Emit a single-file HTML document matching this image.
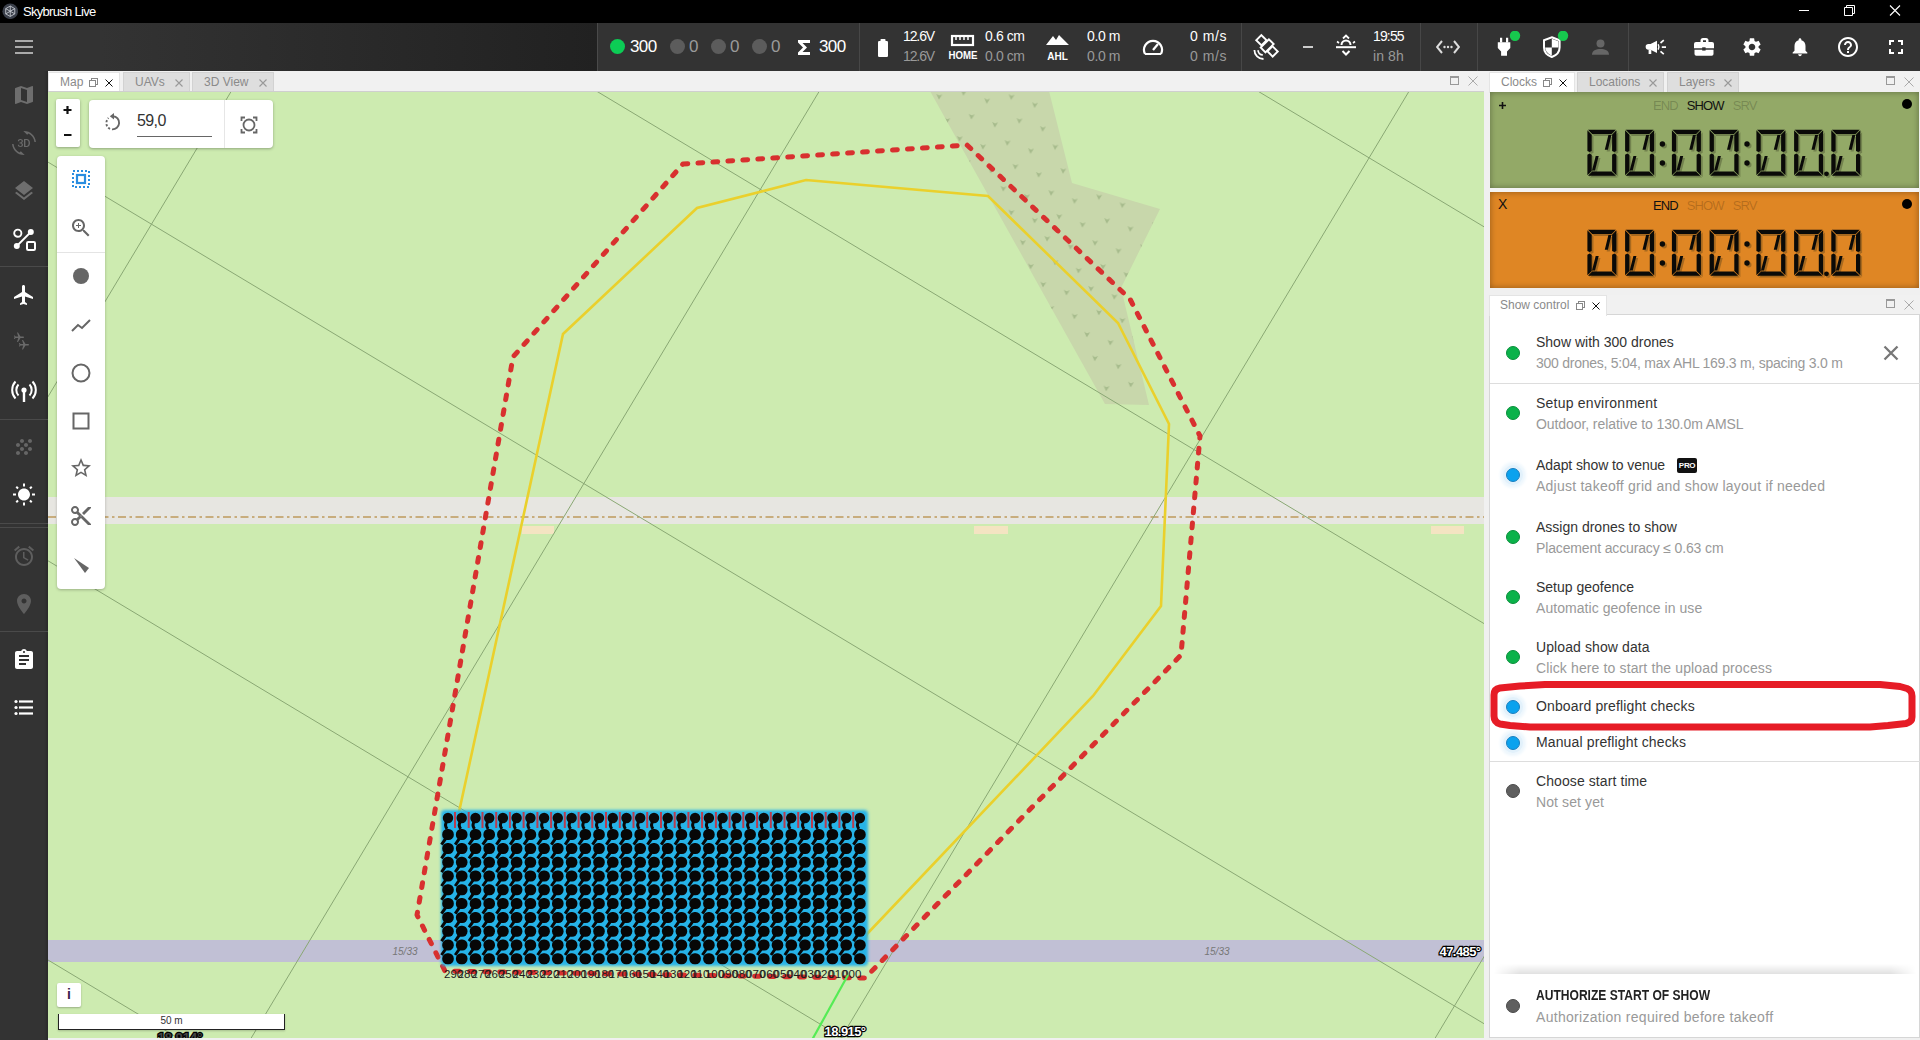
<!DOCTYPE html>
<html><head><meta charset="utf-8">
<style>
*{box-sizing:border-box;margin:0;padding:0}
html,body{width:1920px;height:1040px;overflow:hidden;background:#333;font-family:"Liberation Sans",sans-serif}
.abs{position:absolute}
#title{left:0;top:0;width:1920px;height:23px;background:#000;color:#fff;font-size:13px}
#toolbar{left:0;top:23px;width:1920px;height:48px;background:#333}
#tbleft{left:0;top:0;width:597px;height:48px;background:linear-gradient(to right,#333 0px,#333 100px,#212121 597px)}
.sep{position:absolute;top:0;width:1px;height:48px;background:#474747}
#sidebar{left:0;top:71px;width:48px;height:969px;background:#333}
#mappanel{left:48px;top:71px;width:1441px;height:969px;background:#f0f0f0}
.tab{position:absolute;top:1px;height:20px;background:#dedede;border:1px solid #d2d2d2;border-bottom:none;font-size:12px;color:#8a8a8a}
.tab.act{background:#fff;border-color:#e4e4e4;height:21px}
.tl{position:absolute;top:2px;white-space:nowrap}
.tx{position:absolute;top:2px;font-size:11px;color:#999}
.tx.dk{color:#111}
.tx.lt{color:#aaa}
.rst{position:absolute;top:5px;width:10px;height:9px}
.rst:before{content:"";position:absolute;left:2px;top:0;width:5px;height:5px;border:1px solid #888}
.rst:after{content:"";position:absolute;left:0;top:2px;width:5px;height:5px;border:1px solid #888;background:#fff}
.maxb{position:absolute;width:9px;height:9px;border:1px solid #999;border-top-width:2px}
#right{left:1489px;top:71px;width:431px;height:969px;background:#f0f0f0}
.clockbox{box-shadow:inset 0 0 6px rgba(0,0,0,0.35)}
.clab{font-size:13px;color:#111;white-space:nowrap;word-spacing:6.3px;letter-spacing:-0.9px}
.item{position:absolute;left:1490px;width:430px;height:40px}
.item b{position:absolute;left:46px;top:1px;font-weight:normal;font-size:14px;color:#333;white-space:nowrap}
.item s{position:absolute;left:46px;top:21.5px;text-decoration:none;font-size:14px;color:#999;white-space:nowrap}
.dot{position:absolute;left:16px;top:12px;width:14px;height:14px;border-radius:50%}
.dot.g{background:#0bb24a;border:1px solid #0a8f3c}
.dot.bl{background:#0ba2ee;border:1px solid #1a7fbf;box-shadow:0 0 0 3px #e2f1fb,0 0 3px 6px #eef7fd}
.dot.gr{background:#5f5f5f;border:1px solid #4a4a4a}
.pro{display:inline-block;margin-left:8px;background:#111;color:#fff;font-size:8px;font-weight:bold;padding:2px 2px 2px 2px;border-radius:2px;vertical-align:2px;letter-spacing:-0.3px;line-height:11px}
.tbt{position:absolute;color:#fff;font-size:17px;white-space:nowrap}
.tbs{position:absolute;color:#fff;font-size:14px;white-space:nowrap;line-height:20px;letter-spacing:-0.4px}
.tbs span{color:#999;display:block}
.ico{position:absolute}
</style></head><body>
<div id="title" class="abs">
 <svg class="ico" style="left:1.5px;top:2.5px" width="16.5" height="16.5" viewBox="0 0 19 19"><circle cx="9.5" cy="9.5" r="9" fill="#3a3f4a"/><path d="M9.5 3.5L14.7 6.5V12.5L9.5 15.5L4.3 12.5V6.5Z M9.5 3.5V15.5M4.3 6.5L14.7 12.5M14.7 6.5L4.3 12.5" fill="none" stroke="#c9ccd3" stroke-width="1"/></svg>
 <span class="abs" style="left:23px;top:4px;font-size:13px;color:#fff;letter-spacing:-0.7px">Skybrush Live</span>
 <svg class="ico" style="left:1790px;top:0" width="130" height="23"><path d="M9 10.5H19" stroke="#fff" stroke-width="1"/><path d="M54.5 7.5h8v8h-8zM56.5 7.5V5.5h8v8h-2" fill="none" stroke="#fff" stroke-width="1"/><path d="M100 5.5L110 15.5M110 5.5L100 15.5" stroke="#fff" stroke-width="1.1"/></svg>
</div>
<div id="toolbar" class="abs">
 <div id="tbleft" class="abs"></div>
 <svg class="ico" style="left:15px;top:16px" width="18" height="15"><path d="M0 2H18M0 8H18M0 14H18" stroke="#aaa" stroke-width="2"/></svg>
 <div class="sep" style="left:597px;background:#4a4a4a"></div>
 <div class="sep" style="left:859px"></div>
 <div class="sep" style="left:1241px"></div>
 <div class="sep" style="left:1420px"></div>
 <div class="sep" style="left:1477px"></div>
 <div class="sep" style="left:1628px"></div>
 <div class="abs" style="left:610px;top:16px;width:15px;height:15px;border-radius:50%;background:#0ccc55"></div>
 <span class="tbt" style="left:630px;top:14px;letter-spacing:-0.6px">300</span>
 <div class="abs" style="left:670px;top:16px;width:15px;height:15px;border-radius:50%;background:#5c5c5c"></div>
 <span class="tbt" style="left:689px;top:14px;color:#9a9a9a">0</span>
 <div class="abs" style="left:711px;top:16px;width:15px;height:15px;border-radius:50%;background:#5c5c5c"></div>
 <span class="tbt" style="left:730px;top:14px;color:#9a9a9a">0</span>
 <div class="abs" style="left:752px;top:16px;width:15px;height:15px;border-radius:50%;background:#5c5c5c"></div>
 <span class="tbt" style="left:771px;top:14px;color:#9a9a9a">0</span>
 <svg class="ico" style="left:797px;top:16px" width="14" height="17"><path d="M1 1H13V4H5.5L10 8.5L5.5 13H13V16H1V13.5L6 8.5L1 3.5Z" fill="#fff"/></svg>
 <span class="tbt" style="left:819px;top:14px;letter-spacing:-0.6px">300</span>
 <svg class="ico" style="left:876px;top:15px" width="14" height="20"><rect x="2" y="3" width="10" height="16" rx="1.2" fill="#fff"/><rect x="4.5" y="1" width="5" height="3" rx="0.8" fill="#fff"/></svg>
 <div class="tbs" style="left:903px;top:3px;letter-spacing:-1.1px">12.6V<span>12.6V</span></div>
 <svg class="ico" style="left:947px;top:8px" width="32" height="30"><rect x="5" y="5" width="21" height="9" fill="none" stroke="#fff" stroke-width="2.2"/><path d="M9 5v4M13 5v4M17 5v4M21 5v4" stroke="#fff" stroke-width="1.5"/><text x="16" y="27.5" textLength="29" lengthAdjust="spacingAndGlyphs" font-size="10" font-weight="bold" fill="#fff" text-anchor="middle" font-family="Liberation Sans">HOME</text></svg>
 <div class="tbs" style="left:985px;top:3px">0.6 cm<span>0.0 cm</span></div>
 <svg class="ico" style="left:1045px;top:10px" width="26" height="28"><path d="M1 12L8 3L11 7L14 2L24 12Z" fill="#fff"/><text x="12.5" y="26.5" font-size="10" font-weight="bold" fill="#fff" text-anchor="middle" font-family="Liberation Sans">AHL</text></svg>
 <div class="tbs" style="left:1087px;top:3px">0.0 m<span>0.0 m</span></div>
 <svg class="ico" style="left:1142px;top:14px" width="22" height="20"><path d="M3 17A9 9 0 1 1 19 17" fill="none" stroke="#fff" stroke-width="2.2"/><path d="M3 17H19" stroke="#fff" stroke-width="2"/><path d="M11 13L16 7" stroke="#fff" stroke-width="2.2"/></svg>
 <div class="tbs" style="left:1187px;top:3px;text-align:right;width:40px;letter-spacing:0.55px">0 m/s<span>0 m/s</span></div>
 <svg class="ico" style="left:1250px;top:7px" width="34" height="34"><g transform="translate(17 15.8) rotate(45)" fill="none" stroke="#fff" stroke-width="1.9"><rect x="-11.6" y="-3.6" width="7.4" height="7.2"/><rect x="-3.2" y="-5.9" width="6.7" height="11.6"/><rect x="4.2" y="-3.6" width="7.4" height="7.2"/></g><path d="M4.4 19.9A9.1 9.1 0 0 0 13.5 29M8.1 20.2A4.7 4.7 0 0 0 12.8 24.9" fill="none" stroke="#fff" stroke-width="1.8"/></svg>
 <svg class="ico" style="left:1302px;top:22px" width="12" height="4"><path d="M1 2H11" stroke="#ccc" stroke-width="2"/></svg>
 <svg class="ico" style="left:1334px;top:11px" width="24" height="26"><path d="M9 4.5L12 1.5L15 4.5" fill="none" stroke="#fff" stroke-width="1.8"/><path d="M7.5 11a4.5 4.5 0 0 1 9 0" fill="none" stroke="#fff" stroke-width="2"/><path d="M2 13.2H22" stroke="#fff" stroke-width="2"/><path d="M3 7.5l2 1.5M21 7.5l-2 1.5" stroke="#fff" stroke-width="1.6"/><path d="M8.5 17L12 20.5L15.5 17" fill="none" stroke="#fff" stroke-width="2"/></svg>
 <div class="tbs" style="left:1373px;top:3px"><i style="font-style:normal;letter-spacing:-0.85px">19:55</i><span style="letter-spacing:0.1px">in 8h</span></div>
 <svg class="ico" style="left:1436px;top:16px" width="24" height="16"><path d="M6 2L1 8L6 14M18 2L23 8L18 14" fill="none" stroke="#ddd" stroke-width="2"/><circle cx="8.5" cy="8" r="1.2" fill="#ddd"/><circle cx="12" cy="8" r="1.2" fill="#ddd"/><circle cx="15.5" cy="8" r="1.2" fill="#ddd"/></svg>
 <svg class="ico" style="left:1494px;top:8px" width="30" height="32"><path d="M3.8 11.2H16.3V17L13 20.5V24.7H7.1V20.5L3.8 17Z" fill="#fff"/><path d="M6 6.8H8.2V11.5H6ZM12 6.8H14.2V11.5H12Z" fill="#fff"/><circle cx="21" cy="4.8" r="5.2" fill="#17c94e"/></svg>
 <svg class="ico" style="left:1541px;top:8px" width="30" height="32"><path d="M10.8 6.2L18.6 9.2V16.5C18.6 21.5 15 24.5 10.8 26C6.6 24.5 3 21.5 3 16.5V9.2Z" fill="none" stroke="#fff" stroke-width="2"/><path d="M10.8 7.8L17.4 10.2V16.5H10.8ZM4.2 16.5H10.8V24.5C7.5 23.2 4.4 20.5 4.2 16.5Z" fill="#fff"/><circle cx="22" cy="4.8" r="5.2" fill="#17c94e"/></svg>
 <svg class="ico" style="left:1591px;top:15px" width="20" height="18"><circle cx="9.5" cy="5.5" r="4" fill="#666"/><path d="M1 16.7C1 12.5 5 11 9.5 11S18 12.5 18 16.7Z" fill="#666"/></svg>
 <svg class="ico" style="left:1644px;top:14px" width="24" height="22"><path d="M4.5 7H6.5L13 3.8V16L6.5 12.7H4.5A2.85 2.85 0 0 1 4.5 7Z" fill="#fff"/><path d="M4.6 12.5H7.3V17H4.6Z" fill="#fff"/><path d="M14.2 7.2Q15.6 9.9 14.2 12.6" fill="none" stroke="#fff" stroke-width="1.4"/><path d="M16.5 6L19.8 3.2M17.8 10.2H22M16.5 14.4L19.8 17.2" stroke="#fff" stroke-width="1.7"/></svg>
 <svg class="ico" style="left:1693px;top:14px" width="22" height="22"><path d="M7.5 5V3.5A2.5 2.5 0 0 1 10 1H13A2.5 2.5 0 0 1 15.5 3.5V5H13V3.3H10V5Z" fill="#fff"/><path d="M3 5H19A2 2 0 0 1 21 7V11.3H1V7A2 2 0 0 1 3 5Z" fill="#fff"/><path d="M1.5 12.7H20.5V17A1.8 1.8 0 0 1 18.7 18.8H3.3A1.8 1.8 0 0 1 1.5 17Z" fill="#fff"/><rect x="9.2" y="10.3" width="3.4" height="3.3" fill="#333"/></svg>
 <svg class="ico" style="left:1741px;top:13px" width="22" height="22" viewBox="0 0 24 24"><path fill="#fff" d="M19.14 12.94c.04-.3.06-.61.06-.94 0-.32-.02-.64-.07-.94l2.03-1.58a.49.49 0 0 0 .12-.61l-1.92-3.32a.488.488 0 0 0-.59-.22l-2.39.96c-.5-.38-1.03-.7-1.62-.94l-.36-2.54a.484.484 0 0 0-.48-.41h-3.84c-.24 0-.43.17-.47.41l-.36 2.54c-.59.24-1.13.57-1.62.94l-2.39-.96c-.22-.08-.47 0-.59.22L2.74 8.87c-.12.21-.08.47.12.61l2.03 1.58c-.05.3-.09.63-.09.94s.02.64.07.94l-2.03 1.58a.49.49 0 0 0-.12.61l1.92 3.32c.12.22.37.29.59.22l2.39-.96c.5.38 1.03.7 1.62.94l.36 2.54c.05.24.24.41.48.41h3.84c.24 0 .44-.17.47-.41l.36-2.54c.59-.24 1.13-.56 1.62-.94l2.39.96c.22.08.47 0 .59-.22l1.92-3.32c.12-.22.07-.47-.12-.61l-2.01-1.58zM12 15.6c-1.98 0-3.6-1.62-3.6-3.6s1.62-3.6 3.6-3.6 3.6 1.62 3.6 3.6-1.62 3.6-3.6 3.6z"/></svg>
 <svg class="ico" style="left:1789px;top:12px" width="22" height="24" viewBox="0 0 24 24"><path fill="#fff" d="M12 22c1.1 0 2-.9 2-2h-4c0 1.1.89 2 2 2zm6-6v-5c0-3.07-1.64-5.64-4.5-6.32V4c0-.83-.67-1.5-1.5-1.5s-1.5.67-1.5 1.5v.68C7.63 5.36 6 7.92 6 11v5l-2 2v1h16v-1l-2-2z"/></svg>
 <svg class="ico" style="left:1836px;top:12px" width="24" height="24" viewBox="0 0 24 24"><path fill="#fff" d="M11 18h2v-2h-2v2zm1-16C6.48 2 2 6.48 2 12s4.48 10 10 10 10-4.48 10-10S17.52 2 12 2zm0 18c-4.41 0-8-3.59-8-8s3.59-8 8-8 8 3.59 8 8-3.59 8-8 8zm0-14c-2.21 0-4 1.79-4 4h2c0-1.1.9-2 2-2s2 .9 2 2c0 2-3 1.75-3 5h2c0-2.25 3-2.5 3-5 0-2.21-1.79-4-4-4z"/></svg>
 <svg class="ico" style="left:1884px;top:12px" width="24" height="24" viewBox="0 0 24 24"><path fill="#fff" d="M7 14H5v5h5v-2H7v-3zm-2-4h2V7h3V5H5v5zm12 7h-3v2h5v-5h-2v3zM14 5v2h3v3h2V5h-5z"/></svg>
</div>

<div id="sidebar" class="abs"><div class="abs" style="left:44px;top:0;width:4px;height:969px;background:linear-gradient(to right,rgba(0,0,0,0),rgba(0,0,0,0.18))"></div>
 <svg class="ico" style="left:12px;top:12px" width="24" height="24" viewBox="0 0 24 24"><path fill="#6e6e6e" d="M20.5 3l-.16.03L15 5.1 9 3 3.36 4.9c-.21.07-.36.25-.36.48V20.5c0 .28.22.5.5.5l.16-.03L9 18.9l6 2.1 5.64-1.9c.21-.07.36-.25.36-.48V3.5c0-.28-.22-.5-.5-.5zM15 19l-6-2.11V5l6 2.11V19z"/></svg>
 <svg class="ico" style="left:12px;top:60px" width="24" height="24" viewBox="0 0 24 24"><path fill="#6a6a6a" d="M7.52 21.48C4.25 19.94 1.91 16.76 1.55 13H.05C.56 19.16 5.71 24 12 24l.66-.03-3.81-3.81-1.33 1.32zm.89-6.52c-.19 0-.37-.03-.52-.08-.16-.06-.29-.13-.4-.24-.11-.1-.2-.22-.26-.37-.06-.14-.09-.3-.09-.47h-1.3c0 .36.07.68.21.95.14.27.33.5.56.69.24.18.51.32.82.41.3.1.62.15.96.15.37 0 .72-.05 1.03-.15.32-.1.6-.25.83-.44s.42-.43.55-.72c.13-.29.2-.61.2-.97 0-.19-.02-.38-.07-.56-.05-.18-.12-.35-.23-.51-.1-.16-.24-.3-.4-.43-.17-.13-.37-.23-.61-.31.2-.09.37-.2.52-.33.15-.13.27-.27.37-.42.1-.15.17-.3.22-.46.05-.16.07-.32.07-.48 0-.36-.06-.68-.18-.96-.12-.28-.29-.51-.51-.69-.2-.19-.47-.33-.77-.43C9.1 8.05 8.760 8 8.39 8c-.36 0-.69.05-1 .16-.3.11-.57.26-.79.45-.21.19-.38.41-.51.67-.12.26-.18.54-.18.85h1.3c0-.17.03-.32.09-.45s.14-.25.25-.34c.11-.09.23-.17.38-.22.15-.05.3-.08.48-.08.4 0 .7.1.89.31.19.2.29.49.29.86 0 .18-.03.34-.08.49-.05.15-.14.27-.25.37-.11.1-.25.18-.41.24-.16.06-.36.09-.58.09H7.5v1.03h.77c.22 0 .42.02.6.07s.33.13.45.23c.12.11.22.24.29.4.07.16.1.35.1.57 0 .41-.12.72-.35.93-.23.23-.55.33-.95.33zm8.55-5.92c-.32-.33-.7-.59-1.14-.77-.43-.18-.92-.27-1.460-.27H12v8h2.3c.55 0 1.06-.09 1.51-.27.45-.18.84-.43 1.16-.76.32-.33.57-.73.74-1.19.17-.47.26-.99.26-1.57v-.4c0-.58-.09-1.1-.26-1.57-.18-.47-.43-.87-.75-1.2zm-.39 3.16c0 .42-.05.79-.14 1.13-.1.33-.24.62-.43.85-.19.23-.43.41-.71.53-.29.12-.62.18-.99.18h-.91V9.12h.97c.72 0 1.270.23 1.64.69.38.46.57 1.12.57 1.99v.4zM12 0l-.66.03 3.81 3.81 1.33-1.33c3.27 1.55 5.61 4.72 5.96 8.48h1.5C23.440 4.84 18.290 0 12 0z"/></svg>
 <svg class="ico" style="left:12px;top:108px" width="24" height="24" viewBox="0 0 24 24"><path fill="#6e6e6e" d="M11.99 18.54l-7.37-5.73L3 14.07l9 7 9-7-1.63-1.27-7.38 5.74zM12 16l7.36-5.73L21 9l-9-7-9 7 1.63 1.27L12 16z"/></svg>
 <svg class="ico" style="left:12px;top:157px" width="26" height="26" viewBox="0 0 26 26"><circle cx="5.8" cy="5.2" r="3.6" fill="none" stroke="#fff" stroke-width="1.9"/><rect x="15" y="14" width="8" height="8" rx="1.2" fill="none" stroke="#fff" stroke-width="2"/><path d="M4.8 18L18.8 4" stroke="#fff" stroke-width="1.8"/><circle cx="4.8" cy="18" r="3" fill="#fff"/><circle cx="18.8" cy="4" r="3" fill="#fff"/></svg>
 <div class="abs" style="left:0;top:195px;width:48px;height:1px;background:#4a4a4a"></div>
 <svg class="ico" style="left:12px;top:212px" width="24" height="24" viewBox="0 0 24 24"><path fill="#fff" d="M21 16v-2l-8-5V3.5c0-.83-.67-1.5-1.5-1.5S10 2.67 10 3.5V9l-8 5v2l8-2.5V19l-2 1.5V22l3.5-1 3.5 1v-1.5L13 19v-5.5l8 2.5z"/></svg>
 <svg class="ico" style="left:12px;top:260px" width="24" height="24" viewBox="0 0 24 24"><g fill="#6a6a6a"><path transform="translate(1,0.5) rotate(90 6 6) scale(0.5)" d="M21 16v-2l-8-5V3.5c0-.83-.67-1.5-1.5-1.5S10 2.67 10 3.5V9l-8 5v2l8-2.5V19l-2 1.5V22l3.5-1 3.5 1v-1.5L13 19v-5.5l8 2.5z"/><path transform="translate(6,8) rotate(90 6 6) scale(0.5)" d="M21 16v-2l-8-5V3.5c0-.83-.67-1.5-1.5-1.5S10 2.67 10 3.5V9l-8 5v2l8-2.5V19l-2 1.5V22l3.5-1 3.5 1v-1.5L13 19v-5.5l8 2.5z"/></g></svg>
 <svg class="ico" style="left:11px;top:307px" width="26" height="26" viewBox="0 0 26 26"><path d="M7.5 6.5a8 8 0 0 0 0 11M18.5 6.5a8 8 0 0 1 0 11M4.5 3.5a12.5 12.5 0 0 0 0 17M21.5 3.5a12.5 12.5 0 0 1 0 17" fill="none" stroke="#fff" stroke-width="2"/><circle cx="13" cy="12" r="2.6" fill="#fff"/><path d="M13 13v11" stroke="#fff" stroke-width="2.4"/></svg>
 <div class="abs" style="left:0;top:348px;width:48px;height:1px;background:#4a4a4a"></div>
 <svg class="ico" style="left:12px;top:364px" width="24" height="24" viewBox="0 0 24 24"><path fill="#666" d="M10 12c-1.1 0-2 .9-2 2s.9 2 2 2 2-.9 2-2-.9-2-2-2zM6 8c-1.1 0-2 .9-2 2s.9 2 2 2 2-.9 2-2-.9-2-2-2zm0 8c-1.1 0-2 .9-2 2s.9 2 2 2 2-.9 2-2-.9-2-2-2zm12-8c1.1 0 2-.9 2-2s-.9-2-2-2-2 .9-2 2 .9 2 2 2zm-4 8c-1.1 0-2 .9-2 2s.9 2 2 2 2-.9 2-2-.9-2-2-2zm4-4c-1.1 0-2 .9-2 2s.9 2 2 2 2-.9 2-2-.9-2-2-2zm-4-4c-1.1 0-2 .9-2 2s.9 2 2 2 2-.9 2-2-.9-2-2-2zm-4-4c-1.1 0-2 .9-2 2s.9 2 2 2 2-.9 2-2-.9-2-2-2z"/></svg>
 <svg class="ico" style="left:12px;top:412px" width="24" height="24" viewBox="0 0 24 24"><path fill="#fff" d="M6.76 4.84l-1.8-1.79-1.41 1.41 1.79 1.79 1.42-1.41zM4 10.5H1v2h3v-2zm9-9.95h-2V3.5h2V.55zm7.45 3.91l-1.41-1.41-1.79 1.79 1.41 1.41 1.79-1.79zm-3.21 13.7l1.79 1.8 1.41-1.41-1.8-1.79-1.4 1.4zM20 10.5v2h3v-2h-3zm-8-5c-3.31 0-6 2.69-6 6s2.69 6 6 6 6-2.69 6-6-2.69-6-6-6zm-1 16.95h2V19.5h-2v2.95zm-7.45-3.91l1.41 1.41 1.79-1.8-1.41-1.41-1.79 1.8z"/></svg>
 <div class="abs" style="left:0;top:452px;width:48px;height:1px;background:#4a4a4a"></div>
 <div class="abs" style="left:0;top:456px;width:48px;height:1px;background:#4a4a4a"></div>
 <svg class="ico" style="left:12px;top:473px" width="24" height="24" viewBox="0 0 24 24"><path fill="#5e5e5e" d="M22 5.72l-4.6-3.86-1.29 1.53 4.6 3.86L22 5.72zM7.88 3.39L6.6 1.86 2 5.71l1.29 1.53 4.59-3.85zM12.5 8H11v6l4.75 2.85.75-1.23-4-2.37V8zM12 4c-4.97 0-9 4.03-9 9s4.02 9 9 9c4.97 0 9-4.03 9-9s-4.03-9-9-9zm0 16c-3.87 0-7-3.13-7-7s3.13-7 7-7 7 3.13 7 7-3.13 7-7 7z"/></svg>
 <svg class="ico" style="left:12px;top:521px" width="24" height="24" viewBox="0 0 24 24"><path fill="#5e5e5e" d="M12 2C8.13 2 5 5.13 5 9c0 5.25 7 13 7 13s7-7.75 7-13c0-3.87-3.13-7-7-7zm0 9.5c-1.38 0-2.5-1.12-2.5-2.5s1.12-2.5 2.5-2.5 2.5 1.12 2.5 2.5-1.12 2.5-2.5 2.5z"/></svg>
 <div class="abs" style="left:0;top:560px;width:48px;height:1px;background:#4a4a4a"></div>
 <svg class="ico" style="left:12px;top:577px" width="24" height="24" viewBox="0 0 24 24"><path fill="#fff" d="M19 3h-4.18C14.4 1.84 13.3 1 12 1c-1.3 0-2.4.84-2.82 2H5c-1.1 0-2 .9-2 2v14c0 1.1.9 2 2 2h14c1.1 0 2-.9 2-2V5c0-1.1-.9-2-2-2zm-7 0c.55 0 1 .45 1 1s-.45 1-1 1-1-.45-1-1 .45-1 1-1zm2 14H7v-2h7v2zm3-4H7v-2h10v2zm0-4H7V7h10v2z"/></svg>
 <svg class="ico" style="left:12px;top:624px" width="24" height="24" viewBox="0 0 24 24"><g fill="#fff"><circle cx="4" cy="6.5" r="1.6"/><circle cx="4" cy="12.5" r="1.6"/><circle cx="4" cy="18.5" r="1.6"/><rect x="7" y="5.4" width="14" height="2.2"/><rect x="7" y="11.4" width="14" height="2.2"/><rect x="7" y="17.4" width="14" height="2.2"/></g></svg>
</div>

<div id="mappanel" class="abs">
 <div class="abs" style="left:0;top:0;width:1441px;height:21px;background:#f1f1f1"></div>
 <div class="tab act" style="left:0;width:72px"><span class="tl" style="left:11px">Map</span><span class="rst" style="left:40px"></span><svg class="abs" style="left:56px;top:6px" width="8" height="8"><path d="M0.5 0.5L7.5 7.5M7.5 0.5L0.5 7.5" stroke="#111" stroke-width="1"/></svg></div>
 <div class="tab" style="left:75px;width:67px"><span class="tl" style="left:11px">UAVs</span><svg class="abs" style="left:51px;top:6px" width="8" height="8"><path d="M0.5 0.5L7.5 7.5M7.5 0.5L0.5 7.5" stroke="#999" stroke-width="1.1"/></svg></div>
 <div class="tab" style="left:144px;width:82px"><span class="tl" style="left:11px">3D View</span><svg class="abs" style="left:66px;top:6px" width="8" height="8"><path d="M0.5 0.5L7.5 7.5M7.5 0.5L0.5 7.5" stroke="#999" stroke-width="1.1"/></svg></div>
 <div class="abs" style="left:0;top:20px;width:1436px;height:1px;background:#cfcfcf"></div>
 <span class="maxb" style="left:1402px;top:5px"></span><svg class="abs" style="left:1420px;top:5px" width="10" height="10"><path d="M0.5 0.5L9.5 9.5M9.5 0.5L0.5 9.5" stroke="#aaa" stroke-width="1"/></svg>
</div>

<svg id="mapsvg" class="abs" style="left:0;top:0" width="1920" height="1040" viewBox="0 0 1920 1040">
<defs>
<clipPath id="mc"><rect x="48" y="92" width="1436" height="946"/></clipPath>
<pattern id="scrub" width="48" height="46" patternUnits="userSpaceOnUse" patternTransform="rotate(5)">
<path d="M5 6l3 1.2 3-1.2-3 5.5zM29 12l3 1.2 3-1.2-3 5.5zM15 29l3 1.2 3-1.2-3 5.5zM39 35l3 1.2 3-1.2-3 5.5z" fill="#a6bb8c"/>
</pattern>
<filter id="glow" x="-5%" y="-10%" width="110%" height="120%"><feGaussianBlur stdDeviation="1.5"/></filter>
</defs>
<g clip-path="url(#mc)">
<rect x="48" y="92" width="1436" height="946" fill="#cdebb0"/>
<path d="M930 91L1049 91L1072 183L1160 209L1121 288L1149 405L1105 404Z" fill="#c8d7ab"/>
<path d="M930 91L1049 91L1072 183L1160 209L1121 288L1149 405L1105 404Z" fill="url(#scrub)"/>

<rect x="48" y="497" width="1436" height="27" fill="#e7e6e1"/>
<path d="M48 517H1484" stroke="#bf9a5c" stroke-width="1.6" stroke-dasharray="8 3.5 2.5 3.5"/>
<rect x="522" y="526" width="32" height="8" fill="#f4e4c2"/>
<rect x="974" y="526" width="34" height="8" fill="#f4e4c2"/>
<rect x="1431" y="526" width="33" height="8" fill="#f4e4c2"/>
<rect x="48" y="940" width="1436" height="22" fill="#c1c0d5"/>
<path d="M0 -663.6L1920 488.4M0 -266.8L1920 885.2M0 133.3L1920 1285.3M0 532.0L1920 1684.0M0 931.2L1920 2083.2M286 0L-374 1100M874.0 0L214.0 1100M1463.8 0L803.8 1100M2058.0 0L1398.0 1100" fill="none" stroke="#8aa874" stroke-width="1"/>
<text x="405" y="955" font-size="10" font-style="italic" fill="#777" text-anchor="middle">15/33</text>
<text x="1217" y="955" font-size="10" font-style="italic" fill="#777" text-anchor="middle">15/33</text>
<path d="M806 180L988 196L1118 323L1169 424L1161 606L1093 696L867 934L860 960L448 960L459 812L563 334L697 208Z" fill="none" stroke="#ead02c" stroke-width="2.6"/>

<path d="M683 164L967 145L1130 299L1200 436L1181 655L865 978L445 971L417 915L513 357Z" fill="none" stroke="#d8302f" stroke-width="5" stroke-dasharray="4.8 10.2" stroke-linecap="round" stroke-linejoin="round"/>
<rect x="441" y="810" width="427" height="156" rx="4" fill="#26b3e8" filter="url(#glow)"/>
<path d="M455.0 812v16M468.7 812v16M482.5 812v16M496.2 812v16M509.9 812v16M523.6 812v16M537.4 812v16M551.1 812v16M564.8 812v16M578.6 812v16M592.3 812v16M606.0 812v16M619.8 812v16M633.5 812v16M647.2 812v16M661.0 812v16M674.7 812v16M688.4 812v16M702.1 812v16M715.9 812v16M729.6 812v16M743.3 812v16M757.1 812v16M770.8 812v16M784.5 812v16M798.2 812v16M812.0 812v16M825.7 812v16M839.4 812v16M853.2 812v16" stroke="#e0202a" stroke-width="2" opacity="0.8"/><g fill="#070707"><rect x="442.2" y="829.1" width="11.6" height="11" rx="5.2"/><rect x="455.9" y="829.1" width="11.6" height="11" rx="5.2"/><rect x="469.7" y="829.1" width="11.6" height="11" rx="5.2"/><rect x="483.4" y="829.1" width="11.6" height="11" rx="5.2"/><rect x="497.1" y="829.1" width="11.6" height="11" rx="5.2"/><rect x="510.8" y="829.1" width="11.6" height="11" rx="5.2"/><rect x="524.6" y="829.1" width="11.6" height="11" rx="5.2"/><rect x="538.3" y="829.1" width="11.6" height="11" rx="5.2"/><rect x="552.0" y="829.1" width="11.6" height="11" rx="5.2"/><rect x="565.8" y="829.1" width="11.6" height="11" rx="5.2"/><rect x="579.5" y="829.1" width="11.6" height="11" rx="5.2"/><rect x="593.2" y="829.1" width="11.6" height="11" rx="5.2"/><rect x="607.0" y="829.1" width="11.6" height="11" rx="5.2"/><rect x="620.7" y="829.1" width="11.6" height="11" rx="5.2"/><rect x="634.4" y="829.1" width="11.6" height="11" rx="5.2"/><rect x="648.2" y="829.1" width="11.6" height="11" rx="5.2"/><rect x="661.9" y="829.1" width="11.6" height="11" rx="5.2"/><rect x="675.6" y="829.1" width="11.6" height="11" rx="5.2"/><rect x="689.3" y="829.1" width="11.6" height="11" rx="5.2"/><rect x="703.1" y="829.1" width="11.6" height="11" rx="5.2"/><rect x="716.8" y="829.1" width="11.6" height="11" rx="5.2"/><rect x="730.5" y="829.1" width="11.6" height="11" rx="5.2"/><rect x="744.3" y="829.1" width="11.6" height="11" rx="5.2"/><rect x="758.0" y="829.1" width="11.6" height="11" rx="5.2"/><rect x="771.7" y="829.1" width="11.6" height="11" rx="5.2"/><rect x="785.5" y="829.1" width="11.6" height="11" rx="5.2"/><rect x="799.2" y="829.1" width="11.6" height="11" rx="5.2"/><rect x="812.9" y="829.1" width="11.6" height="11" rx="5.2"/><rect x="826.6" y="829.1" width="11.6" height="11" rx="5.2"/><rect x="840.4" y="829.1" width="11.6" height="11" rx="5.2"/><rect x="854.1" y="829.1" width="11.6" height="11" rx="5.2"/><rect x="442.2" y="842.9" width="11.6" height="11" rx="5.2"/><rect x="455.9" y="842.9" width="11.6" height="11" rx="5.2"/><rect x="469.7" y="842.9" width="11.6" height="11" rx="5.2"/><rect x="483.4" y="842.9" width="11.6" height="11" rx="5.2"/><rect x="497.1" y="842.9" width="11.6" height="11" rx="5.2"/><rect x="510.8" y="842.9" width="11.6" height="11" rx="5.2"/><rect x="524.6" y="842.9" width="11.6" height="11" rx="5.2"/><rect x="538.3" y="842.9" width="11.6" height="11" rx="5.2"/><rect x="552.0" y="842.9" width="11.6" height="11" rx="5.2"/><rect x="565.8" y="842.9" width="11.6" height="11" rx="5.2"/><rect x="579.5" y="842.9" width="11.6" height="11" rx="5.2"/><rect x="593.2" y="842.9" width="11.6" height="11" rx="5.2"/><rect x="607.0" y="842.9" width="11.6" height="11" rx="5.2"/><rect x="620.7" y="842.9" width="11.6" height="11" rx="5.2"/><rect x="634.4" y="842.9" width="11.6" height="11" rx="5.2"/><rect x="648.2" y="842.9" width="11.6" height="11" rx="5.2"/><rect x="661.9" y="842.9" width="11.6" height="11" rx="5.2"/><rect x="675.6" y="842.9" width="11.6" height="11" rx="5.2"/><rect x="689.3" y="842.9" width="11.6" height="11" rx="5.2"/><rect x="703.1" y="842.9" width="11.6" height="11" rx="5.2"/><rect x="716.8" y="842.9" width="11.6" height="11" rx="5.2"/><rect x="730.5" y="842.9" width="11.6" height="11" rx="5.2"/><rect x="744.3" y="842.9" width="11.6" height="11" rx="5.2"/><rect x="758.0" y="842.9" width="11.6" height="11" rx="5.2"/><rect x="771.7" y="842.9" width="11.6" height="11" rx="5.2"/><rect x="785.5" y="842.9" width="11.6" height="11" rx="5.2"/><rect x="799.2" y="842.9" width="11.6" height="11" rx="5.2"/><rect x="812.9" y="842.9" width="11.6" height="11" rx="5.2"/><rect x="826.6" y="842.9" width="11.6" height="11" rx="5.2"/><rect x="840.4" y="842.9" width="11.6" height="11" rx="5.2"/><rect x="854.1" y="842.9" width="11.6" height="11" rx="5.2"/><rect x="442.2" y="856.7" width="11.6" height="11" rx="5.2"/><rect x="455.9" y="856.7" width="11.6" height="11" rx="5.2"/><rect x="469.7" y="856.7" width="11.6" height="11" rx="5.2"/><rect x="483.4" y="856.7" width="11.6" height="11" rx="5.2"/><rect x="497.1" y="856.7" width="11.6" height="11" rx="5.2"/><rect x="510.8" y="856.7" width="11.6" height="11" rx="5.2"/><rect x="524.6" y="856.7" width="11.6" height="11" rx="5.2"/><rect x="538.3" y="856.7" width="11.6" height="11" rx="5.2"/><rect x="552.0" y="856.7" width="11.6" height="11" rx="5.2"/><rect x="565.8" y="856.7" width="11.6" height="11" rx="5.2"/><rect x="579.5" y="856.7" width="11.6" height="11" rx="5.2"/><rect x="593.2" y="856.7" width="11.6" height="11" rx="5.2"/><rect x="607.0" y="856.7" width="11.6" height="11" rx="5.2"/><rect x="620.7" y="856.7" width="11.6" height="11" rx="5.2"/><rect x="634.4" y="856.7" width="11.6" height="11" rx="5.2"/><rect x="648.2" y="856.7" width="11.6" height="11" rx="5.2"/><rect x="661.9" y="856.7" width="11.6" height="11" rx="5.2"/><rect x="675.6" y="856.7" width="11.6" height="11" rx="5.2"/><rect x="689.3" y="856.7" width="11.6" height="11" rx="5.2"/><rect x="703.1" y="856.7" width="11.6" height="11" rx="5.2"/><rect x="716.8" y="856.7" width="11.6" height="11" rx="5.2"/><rect x="730.5" y="856.7" width="11.6" height="11" rx="5.2"/><rect x="744.3" y="856.7" width="11.6" height="11" rx="5.2"/><rect x="758.0" y="856.7" width="11.6" height="11" rx="5.2"/><rect x="771.7" y="856.7" width="11.6" height="11" rx="5.2"/><rect x="785.5" y="856.7" width="11.6" height="11" rx="5.2"/><rect x="799.2" y="856.7" width="11.6" height="11" rx="5.2"/><rect x="812.9" y="856.7" width="11.6" height="11" rx="5.2"/><rect x="826.6" y="856.7" width="11.6" height="11" rx="5.2"/><rect x="840.4" y="856.7" width="11.6" height="11" rx="5.2"/><rect x="854.1" y="856.7" width="11.6" height="11" rx="5.2"/><rect x="442.2" y="870.5" width="11.6" height="11" rx="5.2"/><rect x="455.9" y="870.5" width="11.6" height="11" rx="5.2"/><rect x="469.7" y="870.5" width="11.6" height="11" rx="5.2"/><rect x="483.4" y="870.5" width="11.6" height="11" rx="5.2"/><rect x="497.1" y="870.5" width="11.6" height="11" rx="5.2"/><rect x="510.8" y="870.5" width="11.6" height="11" rx="5.2"/><rect x="524.6" y="870.5" width="11.6" height="11" rx="5.2"/><rect x="538.3" y="870.5" width="11.6" height="11" rx="5.2"/><rect x="552.0" y="870.5" width="11.6" height="11" rx="5.2"/><rect x="565.8" y="870.5" width="11.6" height="11" rx="5.2"/><rect x="579.5" y="870.5" width="11.6" height="11" rx="5.2"/><rect x="593.2" y="870.5" width="11.6" height="11" rx="5.2"/><rect x="607.0" y="870.5" width="11.6" height="11" rx="5.2"/><rect x="620.7" y="870.5" width="11.6" height="11" rx="5.2"/><rect x="634.4" y="870.5" width="11.6" height="11" rx="5.2"/><rect x="648.2" y="870.5" width="11.6" height="11" rx="5.2"/><rect x="661.9" y="870.5" width="11.6" height="11" rx="5.2"/><rect x="675.6" y="870.5" width="11.6" height="11" rx="5.2"/><rect x="689.3" y="870.5" width="11.6" height="11" rx="5.2"/><rect x="703.1" y="870.5" width="11.6" height="11" rx="5.2"/><rect x="716.8" y="870.5" width="11.6" height="11" rx="5.2"/><rect x="730.5" y="870.5" width="11.6" height="11" rx="5.2"/><rect x="744.3" y="870.5" width="11.6" height="11" rx="5.2"/><rect x="758.0" y="870.5" width="11.6" height="11" rx="5.2"/><rect x="771.7" y="870.5" width="11.6" height="11" rx="5.2"/><rect x="785.5" y="870.5" width="11.6" height="11" rx="5.2"/><rect x="799.2" y="870.5" width="11.6" height="11" rx="5.2"/><rect x="812.9" y="870.5" width="11.6" height="11" rx="5.2"/><rect x="826.6" y="870.5" width="11.6" height="11" rx="5.2"/><rect x="840.4" y="870.5" width="11.6" height="11" rx="5.2"/><rect x="854.1" y="870.5" width="11.6" height="11" rx="5.2"/><rect x="442.2" y="884.3" width="11.6" height="11" rx="5.2"/><rect x="455.9" y="884.3" width="11.6" height="11" rx="5.2"/><rect x="469.7" y="884.3" width="11.6" height="11" rx="5.2"/><rect x="483.4" y="884.3" width="11.6" height="11" rx="5.2"/><rect x="497.1" y="884.3" width="11.6" height="11" rx="5.2"/><rect x="510.8" y="884.3" width="11.6" height="11" rx="5.2"/><rect x="524.6" y="884.3" width="11.6" height="11" rx="5.2"/><rect x="538.3" y="884.3" width="11.6" height="11" rx="5.2"/><rect x="552.0" y="884.3" width="11.6" height="11" rx="5.2"/><rect x="565.8" y="884.3" width="11.6" height="11" rx="5.2"/><rect x="579.5" y="884.3" width="11.6" height="11" rx="5.2"/><rect x="593.2" y="884.3" width="11.6" height="11" rx="5.2"/><rect x="607.0" y="884.3" width="11.6" height="11" rx="5.2"/><rect x="620.7" y="884.3" width="11.6" height="11" rx="5.2"/><rect x="634.4" y="884.3" width="11.6" height="11" rx="5.2"/><rect x="648.2" y="884.3" width="11.6" height="11" rx="5.2"/><rect x="661.9" y="884.3" width="11.6" height="11" rx="5.2"/><rect x="675.6" y="884.3" width="11.6" height="11" rx="5.2"/><rect x="689.3" y="884.3" width="11.6" height="11" rx="5.2"/><rect x="703.1" y="884.3" width="11.6" height="11" rx="5.2"/><rect x="716.8" y="884.3" width="11.6" height="11" rx="5.2"/><rect x="730.5" y="884.3" width="11.6" height="11" rx="5.2"/><rect x="744.3" y="884.3" width="11.6" height="11" rx="5.2"/><rect x="758.0" y="884.3" width="11.6" height="11" rx="5.2"/><rect x="771.7" y="884.3" width="11.6" height="11" rx="5.2"/><rect x="785.5" y="884.3" width="11.6" height="11" rx="5.2"/><rect x="799.2" y="884.3" width="11.6" height="11" rx="5.2"/><rect x="812.9" y="884.3" width="11.6" height="11" rx="5.2"/><rect x="826.6" y="884.3" width="11.6" height="11" rx="5.2"/><rect x="840.4" y="884.3" width="11.6" height="11" rx="5.2"/><rect x="854.1" y="884.3" width="11.6" height="11" rx="5.2"/><rect x="442.2" y="898.1" width="11.6" height="11" rx="5.2"/><rect x="455.9" y="898.1" width="11.6" height="11" rx="5.2"/><rect x="469.7" y="898.1" width="11.6" height="11" rx="5.2"/><rect x="483.4" y="898.1" width="11.6" height="11" rx="5.2"/><rect x="497.1" y="898.1" width="11.6" height="11" rx="5.2"/><rect x="510.8" y="898.1" width="11.6" height="11" rx="5.2"/><rect x="524.6" y="898.1" width="11.6" height="11" rx="5.2"/><rect x="538.3" y="898.1" width="11.6" height="11" rx="5.2"/><rect x="552.0" y="898.1" width="11.6" height="11" rx="5.2"/><rect x="565.8" y="898.1" width="11.6" height="11" rx="5.2"/><rect x="579.5" y="898.1" width="11.6" height="11" rx="5.2"/><rect x="593.2" y="898.1" width="11.6" height="11" rx="5.2"/><rect x="607.0" y="898.1" width="11.6" height="11" rx="5.2"/><rect x="620.7" y="898.1" width="11.6" height="11" rx="5.2"/><rect x="634.4" y="898.1" width="11.6" height="11" rx="5.2"/><rect x="648.2" y="898.1" width="11.6" height="11" rx="5.2"/><rect x="661.9" y="898.1" width="11.6" height="11" rx="5.2"/><rect x="675.6" y="898.1" width="11.6" height="11" rx="5.2"/><rect x="689.3" y="898.1" width="11.6" height="11" rx="5.2"/><rect x="703.1" y="898.1" width="11.6" height="11" rx="5.2"/><rect x="716.8" y="898.1" width="11.6" height="11" rx="5.2"/><rect x="730.5" y="898.1" width="11.6" height="11" rx="5.2"/><rect x="744.3" y="898.1" width="11.6" height="11" rx="5.2"/><rect x="758.0" y="898.1" width="11.6" height="11" rx="5.2"/><rect x="771.7" y="898.1" width="11.6" height="11" rx="5.2"/><rect x="785.5" y="898.1" width="11.6" height="11" rx="5.2"/><rect x="799.2" y="898.1" width="11.6" height="11" rx="5.2"/><rect x="812.9" y="898.1" width="11.6" height="11" rx="5.2"/><rect x="826.6" y="898.1" width="11.6" height="11" rx="5.2"/><rect x="840.4" y="898.1" width="11.6" height="11" rx="5.2"/><rect x="854.1" y="898.1" width="11.6" height="11" rx="5.2"/><rect x="442.2" y="911.9" width="11.6" height="11" rx="5.2"/><rect x="455.9" y="911.9" width="11.6" height="11" rx="5.2"/><rect x="469.7" y="911.9" width="11.6" height="11" rx="5.2"/><rect x="483.4" y="911.9" width="11.6" height="11" rx="5.2"/><rect x="497.1" y="911.9" width="11.6" height="11" rx="5.2"/><rect x="510.8" y="911.9" width="11.6" height="11" rx="5.2"/><rect x="524.6" y="911.9" width="11.6" height="11" rx="5.2"/><rect x="538.3" y="911.9" width="11.6" height="11" rx="5.2"/><rect x="552.0" y="911.9" width="11.6" height="11" rx="5.2"/><rect x="565.8" y="911.9" width="11.6" height="11" rx="5.2"/><rect x="579.5" y="911.9" width="11.6" height="11" rx="5.2"/><rect x="593.2" y="911.9" width="11.6" height="11" rx="5.2"/><rect x="607.0" y="911.9" width="11.6" height="11" rx="5.2"/><rect x="620.7" y="911.9" width="11.6" height="11" rx="5.2"/><rect x="634.4" y="911.9" width="11.6" height="11" rx="5.2"/><rect x="648.2" y="911.9" width="11.6" height="11" rx="5.2"/><rect x="661.9" y="911.9" width="11.6" height="11" rx="5.2"/><rect x="675.6" y="911.9" width="11.6" height="11" rx="5.2"/><rect x="689.3" y="911.9" width="11.6" height="11" rx="5.2"/><rect x="703.1" y="911.9" width="11.6" height="11" rx="5.2"/><rect x="716.8" y="911.9" width="11.6" height="11" rx="5.2"/><rect x="730.5" y="911.9" width="11.6" height="11" rx="5.2"/><rect x="744.3" y="911.9" width="11.6" height="11" rx="5.2"/><rect x="758.0" y="911.9" width="11.6" height="11" rx="5.2"/><rect x="771.7" y="911.9" width="11.6" height="11" rx="5.2"/><rect x="785.5" y="911.9" width="11.6" height="11" rx="5.2"/><rect x="799.2" y="911.9" width="11.6" height="11" rx="5.2"/><rect x="812.9" y="911.9" width="11.6" height="11" rx="5.2"/><rect x="826.6" y="911.9" width="11.6" height="11" rx="5.2"/><rect x="840.4" y="911.9" width="11.6" height="11" rx="5.2"/><rect x="854.1" y="911.9" width="11.6" height="11" rx="5.2"/><rect x="442.2" y="925.7" width="11.6" height="11" rx="5.2"/><rect x="455.9" y="925.7" width="11.6" height="11" rx="5.2"/><rect x="469.7" y="925.7" width="11.6" height="11" rx="5.2"/><rect x="483.4" y="925.7" width="11.6" height="11" rx="5.2"/><rect x="497.1" y="925.7" width="11.6" height="11" rx="5.2"/><rect x="510.8" y="925.7" width="11.6" height="11" rx="5.2"/><rect x="524.6" y="925.7" width="11.6" height="11" rx="5.2"/><rect x="538.3" y="925.7" width="11.6" height="11" rx="5.2"/><rect x="552.0" y="925.7" width="11.6" height="11" rx="5.2"/><rect x="565.8" y="925.7" width="11.6" height="11" rx="5.2"/><rect x="579.5" y="925.7" width="11.6" height="11" rx="5.2"/><rect x="593.2" y="925.7" width="11.6" height="11" rx="5.2"/><rect x="607.0" y="925.7" width="11.6" height="11" rx="5.2"/><rect x="620.7" y="925.7" width="11.6" height="11" rx="5.2"/><rect x="634.4" y="925.7" width="11.6" height="11" rx="5.2"/><rect x="648.2" y="925.7" width="11.6" height="11" rx="5.2"/><rect x="661.9" y="925.7" width="11.6" height="11" rx="5.2"/><rect x="675.6" y="925.7" width="11.6" height="11" rx="5.2"/><rect x="689.3" y="925.7" width="11.6" height="11" rx="5.2"/><rect x="703.1" y="925.7" width="11.6" height="11" rx="5.2"/><rect x="716.8" y="925.7" width="11.6" height="11" rx="5.2"/><rect x="730.5" y="925.7" width="11.6" height="11" rx="5.2"/><rect x="744.3" y="925.7" width="11.6" height="11" rx="5.2"/><rect x="758.0" y="925.7" width="11.6" height="11" rx="5.2"/><rect x="771.7" y="925.7" width="11.6" height="11" rx="5.2"/><rect x="785.5" y="925.7" width="11.6" height="11" rx="5.2"/><rect x="799.2" y="925.7" width="11.6" height="11" rx="5.2"/><rect x="812.9" y="925.7" width="11.6" height="11" rx="5.2"/><rect x="826.6" y="925.7" width="11.6" height="11" rx="5.2"/><rect x="840.4" y="925.7" width="11.6" height="11" rx="5.2"/><rect x="854.1" y="925.7" width="11.6" height="11" rx="5.2"/><rect x="442.2" y="939.5" width="11.6" height="11" rx="5.2"/><rect x="455.9" y="939.5" width="11.6" height="11" rx="5.2"/><rect x="469.7" y="939.5" width="11.6" height="11" rx="5.2"/><rect x="483.4" y="939.5" width="11.6" height="11" rx="5.2"/><rect x="497.1" y="939.5" width="11.6" height="11" rx="5.2"/><rect x="510.8" y="939.5" width="11.6" height="11" rx="5.2"/><rect x="524.6" y="939.5" width="11.6" height="11" rx="5.2"/><rect x="538.3" y="939.5" width="11.6" height="11" rx="5.2"/><rect x="552.0" y="939.5" width="11.6" height="11" rx="5.2"/><rect x="565.8" y="939.5" width="11.6" height="11" rx="5.2"/><rect x="579.5" y="939.5" width="11.6" height="11" rx="5.2"/><rect x="593.2" y="939.5" width="11.6" height="11" rx="5.2"/><rect x="607.0" y="939.5" width="11.6" height="11" rx="5.2"/><rect x="620.7" y="939.5" width="11.6" height="11" rx="5.2"/><rect x="634.4" y="939.5" width="11.6" height="11" rx="5.2"/><rect x="648.2" y="939.5" width="11.6" height="11" rx="5.2"/><rect x="661.9" y="939.5" width="11.6" height="11" rx="5.2"/><rect x="675.6" y="939.5" width="11.6" height="11" rx="5.2"/><rect x="689.3" y="939.5" width="11.6" height="11" rx="5.2"/><rect x="703.1" y="939.5" width="11.6" height="11" rx="5.2"/><rect x="716.8" y="939.5" width="11.6" height="11" rx="5.2"/><rect x="730.5" y="939.5" width="11.6" height="11" rx="5.2"/><rect x="744.3" y="939.5" width="11.6" height="11" rx="5.2"/><rect x="758.0" y="939.5" width="11.6" height="11" rx="5.2"/><rect x="771.7" y="939.5" width="11.6" height="11" rx="5.2"/><rect x="785.5" y="939.5" width="11.6" height="11" rx="5.2"/><rect x="799.2" y="939.5" width="11.6" height="11" rx="5.2"/><rect x="812.9" y="939.5" width="11.6" height="11" rx="5.2"/><rect x="826.6" y="939.5" width="11.6" height="11" rx="5.2"/><rect x="840.4" y="939.5" width="11.6" height="11" rx="5.2"/><rect x="854.1" y="939.5" width="11.6" height="11" rx="5.2"/><rect x="442.2" y="953.3" width="11.6" height="11" rx="5.2"/><rect x="455.9" y="953.3" width="11.6" height="11" rx="5.2"/><rect x="469.7" y="953.3" width="11.6" height="11" rx="5.2"/><rect x="483.4" y="953.3" width="11.6" height="11" rx="5.2"/><rect x="497.1" y="953.3" width="11.6" height="11" rx="5.2"/><rect x="510.8" y="953.3" width="11.6" height="11" rx="5.2"/><rect x="524.6" y="953.3" width="11.6" height="11" rx="5.2"/><rect x="538.3" y="953.3" width="11.6" height="11" rx="5.2"/><rect x="552.0" y="953.3" width="11.6" height="11" rx="5.2"/><rect x="565.8" y="953.3" width="11.6" height="11" rx="5.2"/><rect x="579.5" y="953.3" width="11.6" height="11" rx="5.2"/><rect x="593.2" y="953.3" width="11.6" height="11" rx="5.2"/><rect x="607.0" y="953.3" width="11.6" height="11" rx="5.2"/><rect x="620.7" y="953.3" width="11.6" height="11" rx="5.2"/><rect x="634.4" y="953.3" width="11.6" height="11" rx="5.2"/><rect x="648.2" y="953.3" width="11.6" height="11" rx="5.2"/><rect x="661.9" y="953.3" width="11.6" height="11" rx="5.2"/><rect x="675.6" y="953.3" width="11.6" height="11" rx="5.2"/><rect x="689.3" y="953.3" width="11.6" height="11" rx="5.2"/><rect x="703.1" y="953.3" width="11.6" height="11" rx="5.2"/><rect x="716.8" y="953.3" width="11.6" height="11" rx="5.2"/><rect x="730.5" y="953.3" width="11.6" height="11" rx="5.2"/><rect x="744.3" y="953.3" width="11.6" height="11" rx="5.2"/><rect x="758.0" y="953.3" width="11.6" height="11" rx="5.2"/><rect x="771.7" y="953.3" width="11.6" height="11" rx="5.2"/><rect x="785.5" y="953.3" width="11.6" height="11" rx="5.2"/><rect x="799.2" y="953.3" width="11.6" height="11" rx="5.2"/><rect x="812.9" y="953.3" width="11.6" height="11" rx="5.2"/><rect x="826.6" y="953.3" width="11.6" height="11" rx="5.2"/><rect x="840.4" y="953.3" width="11.6" height="11" rx="5.2"/><rect x="854.1" y="953.3" width="11.6" height="11" rx="5.2"/></g><path d="M446.0 838.1L441.5 844.6M459.7 838.1L455.2 844.6M473.5 838.1L469.0 844.6M487.2 838.1L482.7 844.6M500.9 838.1L496.4 844.6M514.6 838.1L510.1 844.6M528.4 838.1L523.9 844.6M542.1 838.1L537.6 844.6M555.8 838.1L551.3 844.6M569.6 838.1L565.1 844.6M583.3 838.1L578.8 844.6M597.0 838.1L592.5 844.6M610.8 838.1L606.3 844.6M624.5 838.1L620.0 844.6M638.2 838.1L633.7 844.6M652.0 838.1L647.5 844.6M665.7 838.1L661.2 844.6M679.4 838.1L674.9 844.6M693.1 838.1L688.6 844.6M706.9 838.1L702.4 844.6M720.6 838.1L716.1 844.6M734.3 838.1L729.8 844.6M748.1 838.1L743.6 844.6M761.8 838.1L757.3 844.6M775.5 838.1L771.0 844.6M789.2 838.1L784.8 844.6M803.0 838.1L798.5 844.6M816.7 838.1L812.2 844.6M830.4 838.1L825.9 844.6M844.2 838.1L839.7 844.6M857.9 838.1L853.4 844.6M446.0 851.9L441.5 858.4M459.7 851.9L455.2 858.4M473.5 851.9L469.0 858.4M487.2 851.9L482.7 858.4M500.9 851.9L496.4 858.4M514.6 851.9L510.1 858.4M528.4 851.9L523.9 858.4M542.1 851.9L537.6 858.4M555.8 851.9L551.3 858.4M569.6 851.9L565.1 858.4M583.3 851.9L578.8 858.4M597.0 851.9L592.5 858.4M610.8 851.9L606.3 858.4M624.5 851.9L620.0 858.4M638.2 851.9L633.7 858.4M652.0 851.9L647.5 858.4M665.7 851.9L661.2 858.4M679.4 851.9L674.9 858.4M693.1 851.9L688.6 858.4M706.9 851.9L702.4 858.4M720.6 851.9L716.1 858.4M734.3 851.9L729.8 858.4M748.1 851.9L743.6 858.4M761.8 851.9L757.3 858.4M775.5 851.9L771.0 858.4M789.2 851.9L784.8 858.4M803.0 851.9L798.5 858.4M816.7 851.9L812.2 858.4M830.4 851.9L825.9 858.4M844.2 851.9L839.7 858.4M857.9 851.9L853.4 858.4M446.0 865.7L441.5 872.2M459.7 865.7L455.2 872.2M473.5 865.7L469.0 872.2M487.2 865.7L482.7 872.2M500.9 865.7L496.4 872.2M514.6 865.7L510.1 872.2M528.4 865.7L523.9 872.2M542.1 865.7L537.6 872.2M555.8 865.7L551.3 872.2M569.6 865.7L565.1 872.2M583.3 865.7L578.8 872.2M597.0 865.7L592.5 872.2M610.8 865.7L606.3 872.2M624.5 865.7L620.0 872.2M638.2 865.7L633.7 872.2M652.0 865.7L647.5 872.2M665.7 865.7L661.2 872.2M679.4 865.7L674.9 872.2M693.1 865.7L688.6 872.2M706.9 865.7L702.4 872.2M720.6 865.7L716.1 872.2M734.3 865.7L729.8 872.2M748.1 865.7L743.6 872.2M761.8 865.7L757.3 872.2M775.5 865.7L771.0 872.2M789.2 865.7L784.8 872.2M803.0 865.7L798.5 872.2M816.7 865.7L812.2 872.2M830.4 865.7L825.9 872.2M844.2 865.7L839.7 872.2M857.9 865.7L853.4 872.2M446.0 879.5L441.5 886.0M459.7 879.5L455.2 886.0M473.5 879.5L469.0 886.0M487.2 879.5L482.7 886.0M500.9 879.5L496.4 886.0M514.6 879.5L510.1 886.0M528.4 879.5L523.9 886.0M542.1 879.5L537.6 886.0M555.8 879.5L551.3 886.0M569.6 879.5L565.1 886.0M583.3 879.5L578.8 886.0M597.0 879.5L592.5 886.0M610.8 879.5L606.3 886.0M624.5 879.5L620.0 886.0M638.2 879.5L633.7 886.0M652.0 879.5L647.5 886.0M665.7 879.5L661.2 886.0M679.4 879.5L674.9 886.0M693.1 879.5L688.6 886.0M706.9 879.5L702.4 886.0M720.6 879.5L716.1 886.0M734.3 879.5L729.8 886.0M748.1 879.5L743.6 886.0M761.8 879.5L757.3 886.0M775.5 879.5L771.0 886.0M789.2 879.5L784.8 886.0M803.0 879.5L798.5 886.0M816.7 879.5L812.2 886.0M830.4 879.5L825.9 886.0M844.2 879.5L839.7 886.0M857.9 879.5L853.4 886.0M446.0 893.3L441.5 899.8M459.7 893.3L455.2 899.8M473.5 893.3L469.0 899.8M487.2 893.3L482.7 899.8M500.9 893.3L496.4 899.8M514.6 893.3L510.1 899.8M528.4 893.3L523.9 899.8M542.1 893.3L537.6 899.8M555.8 893.3L551.3 899.8M569.6 893.3L565.1 899.8M583.3 893.3L578.8 899.8M597.0 893.3L592.5 899.8M610.8 893.3L606.3 899.8M624.5 893.3L620.0 899.8M638.2 893.3L633.7 899.8M652.0 893.3L647.5 899.8M665.7 893.3L661.2 899.8M679.4 893.3L674.9 899.8M693.1 893.3L688.6 899.8M706.9 893.3L702.4 899.8M720.6 893.3L716.1 899.8M734.3 893.3L729.8 899.8M748.1 893.3L743.6 899.8M761.8 893.3L757.3 899.8M775.5 893.3L771.0 899.8M789.2 893.3L784.8 899.8M803.0 893.3L798.5 899.8M816.7 893.3L812.2 899.8M830.4 893.3L825.9 899.8M844.2 893.3L839.7 899.8M857.9 893.3L853.4 899.8M446.0 907.1L441.5 913.6M459.7 907.1L455.2 913.6M473.5 907.1L469.0 913.6M487.2 907.1L482.7 913.6M500.9 907.1L496.4 913.6M514.6 907.1L510.1 913.6M528.4 907.1L523.9 913.6M542.1 907.1L537.6 913.6M555.8 907.1L551.3 913.6M569.6 907.1L565.1 913.6M583.3 907.1L578.8 913.6M597.0 907.1L592.5 913.6M610.8 907.1L606.3 913.6M624.5 907.1L620.0 913.6M638.2 907.1L633.7 913.6M652.0 907.1L647.5 913.6M665.7 907.1L661.2 913.6M679.4 907.1L674.9 913.6M693.1 907.1L688.6 913.6M706.9 907.1L702.4 913.6M720.6 907.1L716.1 913.6M734.3 907.1L729.8 913.6M748.1 907.1L743.6 913.6M761.8 907.1L757.3 913.6M775.5 907.1L771.0 913.6M789.2 907.1L784.8 913.6M803.0 907.1L798.5 913.6M816.7 907.1L812.2 913.6M830.4 907.1L825.9 913.6M844.2 907.1L839.7 913.6M857.9 907.1L853.4 913.6M446.0 920.9L441.5 927.4M459.7 920.9L455.2 927.4M473.5 920.9L469.0 927.4M487.2 920.9L482.7 927.4M500.9 920.9L496.4 927.4M514.6 920.9L510.1 927.4M528.4 920.9L523.9 927.4M542.1 920.9L537.6 927.4M555.8 920.9L551.3 927.4M569.6 920.9L565.1 927.4M583.3 920.9L578.8 927.4M597.0 920.9L592.5 927.4M610.8 920.9L606.3 927.4M624.5 920.9L620.0 927.4M638.2 920.9L633.7 927.4M652.0 920.9L647.5 927.4M665.7 920.9L661.2 927.4M679.4 920.9L674.9 927.4M693.1 920.9L688.6 927.4M706.9 920.9L702.4 927.4M720.6 920.9L716.1 927.4M734.3 920.9L729.8 927.4M748.1 920.9L743.6 927.4M761.8 920.9L757.3 927.4M775.5 920.9L771.0 927.4M789.2 920.9L784.8 927.4M803.0 920.9L798.5 927.4M816.7 920.9L812.2 927.4M830.4 920.9L825.9 927.4M844.2 920.9L839.7 927.4M857.9 920.9L853.4 927.4M446.0 934.7L441.5 941.2M459.7 934.7L455.2 941.2M473.5 934.7L469.0 941.2M487.2 934.7L482.7 941.2M500.9 934.7L496.4 941.2M514.6 934.7L510.1 941.2M528.4 934.7L523.9 941.2M542.1 934.7L537.6 941.2M555.8 934.7L551.3 941.2M569.6 934.7L565.1 941.2M583.3 934.7L578.8 941.2M597.0 934.7L592.5 941.2M610.8 934.7L606.3 941.2M624.5 934.7L620.0 941.2M638.2 934.7L633.7 941.2M652.0 934.7L647.5 941.2M665.7 934.7L661.2 941.2M679.4 934.7L674.9 941.2M693.1 934.7L688.6 941.2M706.9 934.7L702.4 941.2M720.6 934.7L716.1 941.2M734.3 934.7L729.8 941.2M748.1 934.7L743.6 941.2M761.8 934.7L757.3 941.2M775.5 934.7L771.0 941.2M789.2 934.7L784.8 941.2M803.0 934.7L798.5 941.2M816.7 934.7L812.2 941.2M830.4 934.7L825.9 941.2M844.2 934.7L839.7 941.2M857.9 934.7L853.4 941.2M446.0 948.5L441.5 955.0M459.7 948.5L455.2 955.0M473.5 948.5L469.0 955.0M487.2 948.5L482.7 955.0M500.9 948.5L496.4 955.0M514.6 948.5L510.1 955.0M528.4 948.5L523.9 955.0M542.1 948.5L537.6 955.0M555.8 948.5L551.3 955.0M569.6 948.5L565.1 955.0M583.3 948.5L578.8 955.0M597.0 948.5L592.5 955.0M610.8 948.5L606.3 955.0M624.5 948.5L620.0 955.0M638.2 948.5L633.7 955.0M652.0 948.5L647.5 955.0M665.7 948.5L661.2 955.0M679.4 948.5L674.9 955.0M693.1 948.5L688.6 955.0M706.9 948.5L702.4 955.0M720.6 948.5L716.1 955.0M734.3 948.5L729.8 955.0M748.1 948.5L743.6 955.0M761.8 948.5L757.3 955.0M775.5 948.5L771.0 955.0M789.2 948.5L784.8 955.0M803.0 948.5L798.5 955.0M816.7 948.5L812.2 955.0M830.4 948.5L825.9 955.0M844.2 948.5L839.7 955.0M857.9 948.5L853.4 955.0" stroke="#070707" stroke-width="3"/>
<path d="M442.8 818.0a5.2 5.2 0 1 0 10.4 0a5.2 5.2 0 1 0-10.4 0M456.5 818.0a5.2 5.2 0 1 0 10.4 0a5.2 5.2 0 1 0-10.4 0M470.3 818.0a5.2 5.2 0 1 0 10.4 0a5.2 5.2 0 1 0-10.4 0M484.0 818.0a5.2 5.2 0 1 0 10.4 0a5.2 5.2 0 1 0-10.4 0M497.7 818.0a5.2 5.2 0 1 0 10.4 0a5.2 5.2 0 1 0-10.4 0M511.4 818.0a5.2 5.2 0 1 0 10.4 0a5.2 5.2 0 1 0-10.4 0M525.2 818.0a5.2 5.2 0 1 0 10.4 0a5.2 5.2 0 1 0-10.4 0M538.9 818.0a5.2 5.2 0 1 0 10.4 0a5.2 5.2 0 1 0-10.4 0M552.6 818.0a5.2 5.2 0 1 0 10.4 0a5.2 5.2 0 1 0-10.4 0M566.4 818.0a5.2 5.2 0 1 0 10.4 0a5.2 5.2 0 1 0-10.4 0M580.1 818.0a5.2 5.2 0 1 0 10.4 0a5.2 5.2 0 1 0-10.4 0M593.8 818.0a5.2 5.2 0 1 0 10.4 0a5.2 5.2 0 1 0-10.4 0M607.6 818.0a5.2 5.2 0 1 0 10.4 0a5.2 5.2 0 1 0-10.4 0M621.3 818.0a5.2 5.2 0 1 0 10.4 0a5.2 5.2 0 1 0-10.4 0M635.0 818.0a5.2 5.2 0 1 0 10.4 0a5.2 5.2 0 1 0-10.4 0M648.8 818.0a5.2 5.2 0 1 0 10.4 0a5.2 5.2 0 1 0-10.4 0M662.5 818.0a5.2 5.2 0 1 0 10.4 0a5.2 5.2 0 1 0-10.4 0M676.2 818.0a5.2 5.2 0 1 0 10.4 0a5.2 5.2 0 1 0-10.4 0M689.9 818.0a5.2 5.2 0 1 0 10.4 0a5.2 5.2 0 1 0-10.4 0M703.7 818.0a5.2 5.2 0 1 0 10.4 0a5.2 5.2 0 1 0-10.4 0M717.4 818.0a5.2 5.2 0 1 0 10.4 0a5.2 5.2 0 1 0-10.4 0M731.1 818.0a5.2 5.2 0 1 0 10.4 0a5.2 5.2 0 1 0-10.4 0M744.9 818.0a5.2 5.2 0 1 0 10.4 0a5.2 5.2 0 1 0-10.4 0M758.6 818.0a5.2 5.2 0 1 0 10.4 0a5.2 5.2 0 1 0-10.4 0M772.3 818.0a5.2 5.2 0 1 0 10.4 0a5.2 5.2 0 1 0-10.4 0M786.0 818.0a5.2 5.2 0 1 0 10.4 0a5.2 5.2 0 1 0-10.4 0M799.8 818.0a5.2 5.2 0 1 0 10.4 0a5.2 5.2 0 1 0-10.4 0M813.5 818.0a5.2 5.2 0 1 0 10.4 0a5.2 5.2 0 1 0-10.4 0M827.2 818.0a5.2 5.2 0 1 0 10.4 0a5.2 5.2 0 1 0-10.4 0M841.0 818.0a5.2 5.2 0 1 0 10.4 0a5.2 5.2 0 1 0-10.4 0M854.7 818.0a5.2 5.2 0 1 0 10.4 0a5.2 5.2 0 1 0-10.4 0" fill="#0b0b0b"/>
<path d="M447.0 821.0q-3 4 0 8M460.7 821.0q-3 4 0 8M474.5 821.0q-3 4 0 8M488.2 821.0q-3 4 0 8M501.9 821.0q-3 4 0 8M515.6 821.0q-3 4 0 8M529.4 821.0q-3 4 0 8M543.1 821.0q-3 4 0 8M556.8 821.0q-3 4 0 8M570.6 821.0q-3 4 0 8M584.3 821.0q-3 4 0 8M598.0 821.0q-3 4 0 8M611.8 821.0q-3 4 0 8M625.5 821.0q-3 4 0 8M639.2 821.0q-3 4 0 8M653.0 821.0q-3 4 0 8M666.7 821.0q-3 4 0 8M680.4 821.0q-3 4 0 8M694.1 821.0q-3 4 0 8M707.9 821.0q-3 4 0 8M721.6 821.0q-3 4 0 8M735.3 821.0q-3 4 0 8M749.1 821.0q-3 4 0 8M762.8 821.0q-3 4 0 8M776.5 821.0q-3 4 0 8M790.2 821.0q-3 4 0 8M804.0 821.0q-3 4 0 8M817.7 821.0q-3 4 0 8M831.4 821.0q-3 4 0 8M845.2 821.0q-3 4 0 8M858.9 821.0q-3 4 0 8" fill="none" stroke="#070707" stroke-width="3"/>

<text y="978" font-size="11.5" fill="#1c1c1c"><tspan x="444.0">290</tspan><tspan x="457.7">280</tspan><tspan x="471.5">270</tspan><tspan x="485.2">260</tspan><tspan x="498.9">250</tspan><tspan x="512.6">240</tspan><tspan x="526.4">230</tspan><tspan x="540.1">220</tspan><tspan x="553.8">210</tspan><tspan x="567.6">200</tspan><tspan x="581.3">190</tspan><tspan x="595.0">180</tspan><tspan x="608.8">170</tspan><tspan x="622.5">160</tspan><tspan x="636.2">150</tspan><tspan x="650.0">140</tspan><tspan x="663.7">130</tspan><tspan x="677.4">120</tspan><tspan x="691.1">110</tspan><tspan x="704.9">100</tspan><tspan x="718.6">090</tspan><tspan x="732.3">080</tspan><tspan x="746.1">070</tspan><tspan x="759.8">060</tspan><tspan x="773.5">050</tspan><tspan x="787.2">040</tspan><tspan x="801.0">030</tspan><tspan x="814.7">020</tspan><tspan x="828.4">010</tspan><tspan x="842.2">000</tspan></text>
<path d="M848 975L812 1040" stroke="#55ec55" stroke-width="2.2"/>

<text x="1460" y="956" font-size="13" font-weight="bold" fill="#fff" stroke="#000" stroke-width="2.5" paint-order="stroke" text-anchor="middle" letter-spacing="-0.6">47.485°</text>
<text x="845" y="1036" font-size="13" font-weight="bold" fill="#fff" stroke="#000" stroke-width="2.5" paint-order="stroke" text-anchor="middle" letter-spacing="-0.6">18.915°</text>
<text x="180" y="1042" font-size="13" font-weight="bold" fill="#444" stroke="#000" stroke-width="2.5" paint-order="stroke" text-anchor="middle">18.914°</text>
</g>
</svg>
<div class="abs" style="left:56px;top:99px;width:24px;height:48px;background:#fff;border-radius:2px;box-shadow:0 1px 3px rgba(0,0,0,0.3)">
 <svg class="ico" style="left:0;top:0" width="24" height="48"><path d="M7.5 11H15.5M11.5 7V15M8 36H15.5" stroke="#111" stroke-width="2.2"/></svg>
</div>
<div class="abs" style="left:89px;top:100px;width:184px;height:48px;background:#fff;border-radius:4px;box-shadow:0 1px 3px rgba(0,0,0,0.3)">
 <svg class="ico" style="left:14px;top:13px" width="20" height="20" viewBox="0 0 20 20"><path d="M10 3.2A6.6 6.6 0 1 1 9 16.4" fill="none" stroke="#666" stroke-width="1.9"/><path d="M7 16a6.6 6.6 0 0 1-3.6-6.2A6.6 6.6 0 0 1 5.5 5" fill="none" stroke="#666" stroke-width="1.9" stroke-dasharray="2.2 1.8"/><path d="M11 0L6.8 3.2L11 6.4Z" fill="#666"/></svg>
 <span class="abs" style="left:48px;top:12px;font-size:16px;color:#333;letter-spacing:-0.6px">59,0</span>
 <div class="abs" style="left:48px;top:36px;width:75px;height:1px;background:#666"></div>
 <div class="abs" style="left:135px;top:0;width:1px;height:48px;background:#e6e6e6"></div>
 <svg class="ico" style="left:151px;top:16px" width="18" height="18" viewBox="0 0 18 18"><circle cx="9" cy="9" r="5.5" fill="none" stroke="#666" stroke-width="1.8"/><path d="M1.5 5V1.5H5M13 1.5H16.5V5M16.5 13V16.5H13M5 16.5H1.5V13" fill="none" stroke="#666" stroke-width="1.8"/></svg>
</div>
<div class="abs" style="left:57px;top:156px;width:48px;height:433px;background:#fff;border-radius:4px;box-shadow:0 1px 3px rgba(0,0,0,0.25)">
 <svg class="ico" style="left:14px;top:13px" width="20" height="20" viewBox="0 0 20 20"><rect x="2" y="2" width="16" height="16" fill="none" stroke="#2a8de0" stroke-width="2" stroke-dasharray="2 2"/><rect x="6" y="6" width="8" height="8" fill="none" stroke="#2a8de0" stroke-width="2.2"/></svg>
 <svg class="ico" style="left:12px;top:60px" width="24" height="24" viewBox="0 0 24 24"><path fill="#666" d="M15.5 14h-.79l-.28-.27C15.41 12.59 16 11.11 16 9.5 16 5.91 13.09 3 9.5 3S3 5.91 3 9.5 5.91 16 9.5 16c1.61 0 3.09-.59 4.23-1.57l.27.28v.79l5 4.99L20.49 19l-4.99-5zm-6 0C7.01 14 5 11.99 5 9.5S7.01 5 9.5 5 14 7.01 14 9.5 11.99 14 9.5 14zm2.5-4h-2v2H9v-2H7V9h2V7h1v2h2v1z"/></svg>
 <div class="abs" style="left:0;top:96px;width:48px;height:1px;background:#e4e4e4"></div>
 <div class="abs" style="left:16px;top:112px;width:16px;height:16px;border-radius:50%;background:#666"></div>
 <svg class="ico" style="left:14px;top:160px" width="20" height="18"><path d="M1 15L7 9L11 12L19 4" fill="none" stroke="#666" stroke-width="2"/></svg>
 <svg class="ico" style="left:14px;top:207px" width="20" height="20"><circle cx="10" cy="10" r="8.5" fill="none" stroke="#666" stroke-width="2"/></svg>
 <svg class="ico" style="left:15px;top:256px" width="18" height="18"><rect x="1.5" y="1.5" width="15" height="15" fill="none" stroke="#666" stroke-width="2"/></svg>
 <svg class="ico" style="left:12px;top:300px" width="24" height="24" viewBox="0 0 24 24"><path fill="#666" d="M22 9.24l-7.19-.62L12 2 9.19 8.63 2 9.24l5.46 4.73L5.82 21 12 17.27 18.18 21l-1.63-7.03L22 9.24zM12 15.4l-3.76 2.27 1-4.28-3.32-2.88 4.38-.38L12 6.1l1.71 4.04 4.38.38-3.32 2.88 1 4.28L12 15.4z"/></svg>
 <svg class="ico" style="left:12px;top:348px" width="24" height="24" viewBox="0 0 24 24"><path fill="#666" d="M9.64 7.64c.23-.5.36-1.05.36-1.64 0-2.21-1.79-4-4-4S2 3.79 2 6s1.79 4 4 4c.59 0 1.14-.13 1.64-.36L10 12l-2.36 2.36C7.14 14.13 6.59 14 6 14c-2.21 0-4 1.79-4 4s1.79 4 4 4 4-1.79 4-4c0-.59-.13-1.14-.36-1.64L12 14l7 7h3v-1L9.64 7.64zM6 8c-1.1 0-2-.89-2-2s.9-2 2-2 2 .89 2 2-.9 2-2 2zm0 12c-1.1 0-2-.89-2-2s.9-2 2-2 2 .89 2 2-.9 2-2 2zm6-7.5c-.28 0-.5-.22-.5-.5s.22-.5.5-.5.5.22.5.5-.22.5-.5.5zM19 3l-6 6 2 2 7-7V3z"/></svg>
 <svg class="ico" style="left:14px;top:399px" width="20" height="20"><path d="M3 3L18 13L14 18Z" fill="#666"/></svg>
</div>
<div class="abs" style="left:57px;top:983px;width:24px;height:24px;background:#fff;border-radius:2px;box-shadow:0 1px 2px rgba(0,0,0,0.25);font-size:14px;font-weight:bold;color:#3a1d4a;text-align:center;line-height:23px">i</div>
<div class="abs" style="left:58px;top:1014px;width:227px;height:16px;background:#fff;border:1px solid #222;border-top:none;box-shadow:0 1px 2px rgba(0,0,0,0.2);font-size:10px;color:#333;text-align:center;line-height:14px">50 m</div>

<div id="right" class="abs">
 <div class="abs" style="left:0;top:0;width:431px;height:21px;background:#f1f1f1"></div>
 <div class="tab act" style="left:0;width:86px"><span class="tl" style="left:11px">Clocks</span><span class="rst" style="left:53px"></span><svg class="abs" style="left:69px;top:6px" width="8" height="8"><path d="M0.5 0.5L7.5 7.5M7.5 0.5L0.5 7.5" stroke="#111" stroke-width="1"/></svg></div>
 <div class="tab" style="left:88px;width:87px"><span class="tl" style="left:11px">Locations</span><svg class="abs" style="left:71px;top:6px" width="8" height="8"><path d="M0.5 0.5L7.5 7.5M7.5 0.5L0.5 7.5" stroke="#999" stroke-width="1.1"/></svg></div>
 <div class="tab" style="left:178px;width:72px"><span class="tl" style="left:11px">Layers</span><svg class="abs" style="left:56px;top:6px" width="8" height="8"><path d="M0.5 0.5L7.5 7.5M7.5 0.5L0.5 7.5" stroke="#999" stroke-width="1.1"/></svg></div>
 <span class="maxb" style="left:397px;top:5px"></span><svg class="abs" style="left:415px;top:6px" width="10" height="10"><path d="M0.5 0.5L9.5 9.5M9.5 0.5L0.5 9.5" stroke="#aaa" stroke-width="1"/></svg>
 <div class="abs clockbox" style="left:1px;top:21px;width:429px;height:96px;background:#93a967"></div>
 <div class="abs" style="left:1px;top:117px;width:429px;height:4px;background:#f4f4f4"></div>
 <div class="abs clockbox" style="left:1px;top:121px;width:429px;height:96px;background:#df8624"></div>
 <svg class="abs" style="left:10px;top:31px" width="7" height="7"><path d="M0 3.5H7M3.5 0V7" stroke="#111" stroke-width="1.6"/></svg>
 <div class="abs clab" style="left:9px;top:125px;font-size:14px">X</div>
 <div class="abs clab" style="left:164px;top:27px"><span style="color:rgba(0,0,0,0.2)">END</span> <span style="color:#111">SHOW</span> <span style="color:rgba(0,0,0,0.2)">SRV</span></div>
 <div class="abs clab" style="left:164px;top:127px"><span style="color:#111">END</span> <span style="color:rgba(0,0,0,0.2)">SHOW</span> <span style="color:rgba(0,0,0,0.2)">SRV</span></div>
 <div class="abs" style="left:413px;top:28px;width:10px;height:10px;border-radius:50%;background:#000"></div>
 <div class="abs" style="left:413px;top:128px;width:10px;height:10px;border-radius:50%;background:#000"></div>
 <div class="abs" style="left:0;top:224px;width:431px;height:21px;background:#f1f1f1"></div>
 <div class="abs" style="left:0;top:243px;width:431px;height:724px;background:#fff;border:1px solid #d6d6d6"></div>
 <div class="tab act" style="left:0;top:224px;width:118px"><span class="tl" style="left:10px">Show control</span><span class="rst" style="left:86px"></span><svg class="abs" style="left:102px;top:6px" width="8" height="8"><path d="M0.5 0.5L7.5 7.5M7.5 0.5L0.5 7.5" stroke="#111" stroke-width="1"/></svg></div>
 <span class="maxb" style="left:397px;top:228px"></span><svg class="abs" style="left:415px;top:229px" width="10" height="10"><path d="M0.5 0.5L9.5 9.5M9.5 0.5L0.5 9.5" stroke="#aaa" stroke-width="1"/></svg>
 
</div>

<svg class="abs" style="left:0;top:0" width="1920" height="1040" viewBox="0 0 1920 1040"><g fill="rgba(40,40,20,0.30)" transform="translate(1.8,1.8)"><path transform="translate(1587.4,129.8)" d="M0.55 0.00L28.45 0.00L24.15 4.30L4.85 4.30ZM4.85 41.70L24.15 41.70L28.45 46.00L0.55 46.00ZM0.00 0.55L4.30 4.85L4.30 21.10L2.15 22.30L0.00 21.10ZM0.00 24.90L2.15 23.70L4.30 24.90L4.30 41.15L0.00 45.45ZM29.00 0.55L29.00 21.10L26.85 22.30L24.70 21.10L24.70 4.85ZM29.00 24.90L29.00 45.45L24.70 41.15L24.70 24.90L26.85 23.70ZM21.00 5.30L24.00 5.30L20.50 20.00L17.40 20.00ZM8.30 26.30L11.30 26.30L7.60 40.80L4.60 40.80Z"/><path transform="translate(1625.1,129.8)" d="M0.55 0.00L28.45 0.00L24.15 4.30L4.85 4.30ZM4.85 41.70L24.15 41.70L28.45 46.00L0.55 46.00ZM0.00 0.55L4.30 4.85L4.30 21.10L2.15 22.30L0.00 21.10ZM0.00 24.90L2.15 23.70L4.30 24.90L4.30 41.15L0.00 45.45ZM29.00 0.55L29.00 21.10L26.85 22.30L24.70 21.10L24.70 4.85ZM29.00 24.90L29.00 45.45L24.70 41.15L24.70 24.90L26.85 23.70ZM21.00 5.30L24.00 5.30L20.50 20.00L17.40 20.00ZM8.30 26.30L11.30 26.30L7.60 40.80L4.60 40.80Z"/><path transform="translate(1671.9,129.8)" d="M0.55 0.00L28.45 0.00L24.15 4.30L4.85 4.30ZM4.85 41.70L24.15 41.70L28.45 46.00L0.55 46.00ZM0.00 0.55L4.30 4.85L4.30 21.10L2.15 22.30L0.00 21.10ZM0.00 24.90L2.15 23.70L4.30 24.90L4.30 41.15L0.00 45.45ZM29.00 0.55L29.00 21.10L26.85 22.30L24.70 21.10L24.70 4.85ZM29.00 24.90L29.00 45.45L24.70 41.15L24.70 24.90L26.85 23.70ZM21.00 5.30L24.00 5.30L20.50 20.00L17.40 20.00ZM8.30 26.30L11.30 26.30L7.60 40.80L4.60 40.80Z"/><path transform="translate(1709.6,129.8)" d="M0.55 0.00L28.45 0.00L24.15 4.30L4.85 4.30ZM4.85 41.70L24.15 41.70L28.45 46.00L0.55 46.00ZM0.00 0.55L4.30 4.85L4.30 21.10L2.15 22.30L0.00 21.10ZM0.00 24.90L2.15 23.70L4.30 24.90L4.30 41.15L0.00 45.45ZM29.00 0.55L29.00 21.10L26.85 22.30L24.70 21.10L24.70 4.85ZM29.00 24.90L29.00 45.45L24.70 41.15L24.70 24.90L26.85 23.70ZM21.00 5.30L24.00 5.30L20.50 20.00L17.40 20.00ZM8.30 26.30L11.30 26.30L7.60 40.80L4.60 40.80Z"/><path transform="translate(1756.4,129.8)" d="M0.55 0.00L28.45 0.00L24.15 4.30L4.85 4.30ZM4.85 41.70L24.15 41.70L28.45 46.00L0.55 46.00ZM0.00 0.55L4.30 4.85L4.30 21.10L2.15 22.30L0.00 21.10ZM0.00 24.90L2.15 23.70L4.30 24.90L4.30 41.15L0.00 45.45ZM29.00 0.55L29.00 21.10L26.85 22.30L24.70 21.10L24.70 4.85ZM29.00 24.90L29.00 45.45L24.70 41.15L24.70 24.90L26.85 23.70ZM21.00 5.30L24.00 5.30L20.50 20.00L17.40 20.00ZM8.30 26.30L11.30 26.30L7.60 40.80L4.60 40.80Z"/><path transform="translate(1794.1,129.8)" d="M0.55 0.00L28.45 0.00L24.15 4.30L4.85 4.30ZM4.85 41.70L24.15 41.70L28.45 46.00L0.55 46.00ZM0.00 0.55L4.30 4.85L4.30 21.10L2.15 22.30L0.00 21.10ZM0.00 24.90L2.15 23.70L4.30 24.90L4.30 41.15L0.00 45.45ZM29.00 0.55L29.00 21.10L26.85 22.30L24.70 21.10L24.70 4.85ZM29.00 24.90L29.00 45.45L24.70 41.15L24.70 24.90L26.85 23.70ZM21.00 5.30L24.00 5.30L20.50 20.00L17.40 20.00ZM8.30 26.30L11.30 26.30L7.60 40.80L4.60 40.80Z"/><path transform="translate(1831.3,129.8)" d="M0.55 0.00L28.45 0.00L24.15 4.30L4.85 4.30ZM4.85 41.70L24.15 41.70L28.45 46.00L0.55 46.00ZM0.00 0.55L4.30 4.85L4.30 21.10L2.15 22.30L0.00 21.10ZM0.00 24.90L2.15 23.70L4.30 24.90L4.30 41.15L0.00 45.45ZM29.00 0.55L29.00 21.10L26.85 22.30L24.70 21.10L24.70 4.85ZM29.00 24.90L29.00 45.45L24.70 41.15L24.70 24.90L26.85 23.70ZM21.00 5.30L24.00 5.30L20.50 20.00L17.40 20.00ZM8.30 26.30L11.30 26.30L7.60 40.80L4.60 40.80Z"/><circle cx="1662.4" cy="144.0" r="2.7"/><circle cx="1662.4" cy="163.0" r="2.7"/><circle cx="1747" cy="144.0" r="2.7"/><circle cx="1747" cy="163.0" r="2.7"/><circle cx="1826.5" cy="173.8" r="2.4"/></g><g fill="#0a0a08"><path transform="translate(1587.4,129.8)" d="M0.55 0.00L28.45 0.00L24.15 4.30L4.85 4.30ZM4.85 41.70L24.15 41.70L28.45 46.00L0.55 46.00ZM0.00 0.55L4.30 4.85L4.30 21.10L2.15 22.30L0.00 21.10ZM0.00 24.90L2.15 23.70L4.30 24.90L4.30 41.15L0.00 45.45ZM29.00 0.55L29.00 21.10L26.85 22.30L24.70 21.10L24.70 4.85ZM29.00 24.90L29.00 45.45L24.70 41.15L24.70 24.90L26.85 23.70ZM21.00 5.30L24.00 5.30L20.50 20.00L17.40 20.00ZM8.30 26.30L11.30 26.30L7.60 40.80L4.60 40.80Z"/><path transform="translate(1625.1,129.8)" d="M0.55 0.00L28.45 0.00L24.15 4.30L4.85 4.30ZM4.85 41.70L24.15 41.70L28.45 46.00L0.55 46.00ZM0.00 0.55L4.30 4.85L4.30 21.10L2.15 22.30L0.00 21.10ZM0.00 24.90L2.15 23.70L4.30 24.90L4.30 41.15L0.00 45.45ZM29.00 0.55L29.00 21.10L26.85 22.30L24.70 21.10L24.70 4.85ZM29.00 24.90L29.00 45.45L24.70 41.15L24.70 24.90L26.85 23.70ZM21.00 5.30L24.00 5.30L20.50 20.00L17.40 20.00ZM8.30 26.30L11.30 26.30L7.60 40.80L4.60 40.80Z"/><path transform="translate(1671.9,129.8)" d="M0.55 0.00L28.45 0.00L24.15 4.30L4.85 4.30ZM4.85 41.70L24.15 41.70L28.45 46.00L0.55 46.00ZM0.00 0.55L4.30 4.85L4.30 21.10L2.15 22.30L0.00 21.10ZM0.00 24.90L2.15 23.70L4.30 24.90L4.30 41.15L0.00 45.45ZM29.00 0.55L29.00 21.10L26.85 22.30L24.70 21.10L24.70 4.85ZM29.00 24.90L29.00 45.45L24.70 41.15L24.70 24.90L26.85 23.70ZM21.00 5.30L24.00 5.30L20.50 20.00L17.40 20.00ZM8.30 26.30L11.30 26.30L7.60 40.80L4.60 40.80Z"/><path transform="translate(1709.6,129.8)" d="M0.55 0.00L28.45 0.00L24.15 4.30L4.85 4.30ZM4.85 41.70L24.15 41.70L28.45 46.00L0.55 46.00ZM0.00 0.55L4.30 4.85L4.30 21.10L2.15 22.30L0.00 21.10ZM0.00 24.90L2.15 23.70L4.30 24.90L4.30 41.15L0.00 45.45ZM29.00 0.55L29.00 21.10L26.85 22.30L24.70 21.10L24.70 4.85ZM29.00 24.90L29.00 45.45L24.70 41.15L24.70 24.90L26.85 23.70ZM21.00 5.30L24.00 5.30L20.50 20.00L17.40 20.00ZM8.30 26.30L11.30 26.30L7.60 40.80L4.60 40.80Z"/><path transform="translate(1756.4,129.8)" d="M0.55 0.00L28.45 0.00L24.15 4.30L4.85 4.30ZM4.85 41.70L24.15 41.70L28.45 46.00L0.55 46.00ZM0.00 0.55L4.30 4.85L4.30 21.10L2.15 22.30L0.00 21.10ZM0.00 24.90L2.15 23.70L4.30 24.90L4.30 41.15L0.00 45.45ZM29.00 0.55L29.00 21.10L26.85 22.30L24.70 21.10L24.70 4.85ZM29.00 24.90L29.00 45.45L24.70 41.15L24.70 24.90L26.85 23.70ZM21.00 5.30L24.00 5.30L20.50 20.00L17.40 20.00ZM8.30 26.30L11.30 26.30L7.60 40.80L4.60 40.80Z"/><path transform="translate(1794.1,129.8)" d="M0.55 0.00L28.45 0.00L24.15 4.30L4.85 4.30ZM4.85 41.70L24.15 41.70L28.45 46.00L0.55 46.00ZM0.00 0.55L4.30 4.85L4.30 21.10L2.15 22.30L0.00 21.10ZM0.00 24.90L2.15 23.70L4.30 24.90L4.30 41.15L0.00 45.45ZM29.00 0.55L29.00 21.10L26.85 22.30L24.70 21.10L24.70 4.85ZM29.00 24.90L29.00 45.45L24.70 41.15L24.70 24.90L26.85 23.70ZM21.00 5.30L24.00 5.30L20.50 20.00L17.40 20.00ZM8.30 26.30L11.30 26.30L7.60 40.80L4.60 40.80Z"/><path transform="translate(1831.3,129.8)" d="M0.55 0.00L28.45 0.00L24.15 4.30L4.85 4.30ZM4.85 41.70L24.15 41.70L28.45 46.00L0.55 46.00ZM0.00 0.55L4.30 4.85L4.30 21.10L2.15 22.30L0.00 21.10ZM0.00 24.90L2.15 23.70L4.30 24.90L4.30 41.15L0.00 45.45ZM29.00 0.55L29.00 21.10L26.85 22.30L24.70 21.10L24.70 4.85ZM29.00 24.90L29.00 45.45L24.70 41.15L24.70 24.90L26.85 23.70ZM21.00 5.30L24.00 5.30L20.50 20.00L17.40 20.00ZM8.30 26.30L11.30 26.30L7.60 40.80L4.60 40.80Z"/><circle cx="1662.4" cy="144.0" r="2.7"/><circle cx="1662.4" cy="163.0" r="2.7"/><circle cx="1747" cy="144.0" r="2.7"/><circle cx="1747" cy="163.0" r="2.7"/><circle cx="1826.5" cy="173.8" r="2.4"/></g><g fill="rgba(40,40,20,0.30)" transform="translate(1.8,1.8)"><path transform="translate(1587.4,229.8)" d="M0.55 0.00L28.45 0.00L24.15 4.30L4.85 4.30ZM4.85 41.70L24.15 41.70L28.45 46.00L0.55 46.00ZM0.00 0.55L4.30 4.85L4.30 21.10L2.15 22.30L0.00 21.10ZM0.00 24.90L2.15 23.70L4.30 24.90L4.30 41.15L0.00 45.45ZM29.00 0.55L29.00 21.10L26.85 22.30L24.70 21.10L24.70 4.85ZM29.00 24.90L29.00 45.45L24.70 41.15L24.70 24.90L26.85 23.70ZM21.00 5.30L24.00 5.30L20.50 20.00L17.40 20.00ZM8.30 26.30L11.30 26.30L7.60 40.80L4.60 40.80Z"/><path transform="translate(1625.1,229.8)" d="M0.55 0.00L28.45 0.00L24.15 4.30L4.85 4.30ZM4.85 41.70L24.15 41.70L28.45 46.00L0.55 46.00ZM0.00 0.55L4.30 4.85L4.30 21.10L2.15 22.30L0.00 21.10ZM0.00 24.90L2.15 23.70L4.30 24.90L4.30 41.15L0.00 45.45ZM29.00 0.55L29.00 21.10L26.85 22.30L24.70 21.10L24.70 4.85ZM29.00 24.90L29.00 45.45L24.70 41.15L24.70 24.90L26.85 23.70ZM21.00 5.30L24.00 5.30L20.50 20.00L17.40 20.00ZM8.30 26.30L11.30 26.30L7.60 40.80L4.60 40.80Z"/><path transform="translate(1671.9,229.8)" d="M0.55 0.00L28.45 0.00L24.15 4.30L4.85 4.30ZM4.85 41.70L24.15 41.70L28.45 46.00L0.55 46.00ZM0.00 0.55L4.30 4.85L4.30 21.10L2.15 22.30L0.00 21.10ZM0.00 24.90L2.15 23.70L4.30 24.90L4.30 41.15L0.00 45.45ZM29.00 0.55L29.00 21.10L26.85 22.30L24.70 21.10L24.70 4.85ZM29.00 24.90L29.00 45.45L24.70 41.15L24.70 24.90L26.85 23.70ZM21.00 5.30L24.00 5.30L20.50 20.00L17.40 20.00ZM8.30 26.30L11.30 26.30L7.60 40.80L4.60 40.80Z"/><path transform="translate(1709.6,229.8)" d="M0.55 0.00L28.45 0.00L24.15 4.30L4.85 4.30ZM4.85 41.70L24.15 41.70L28.45 46.00L0.55 46.00ZM0.00 0.55L4.30 4.85L4.30 21.10L2.15 22.30L0.00 21.10ZM0.00 24.90L2.15 23.70L4.30 24.90L4.30 41.15L0.00 45.45ZM29.00 0.55L29.00 21.10L26.85 22.30L24.70 21.10L24.70 4.85ZM29.00 24.90L29.00 45.45L24.70 41.15L24.70 24.90L26.85 23.70ZM21.00 5.30L24.00 5.30L20.50 20.00L17.40 20.00ZM8.30 26.30L11.30 26.30L7.60 40.80L4.60 40.80Z"/><path transform="translate(1756.4,229.8)" d="M0.55 0.00L28.45 0.00L24.15 4.30L4.85 4.30ZM4.85 41.70L24.15 41.70L28.45 46.00L0.55 46.00ZM0.00 0.55L4.30 4.85L4.30 21.10L2.15 22.30L0.00 21.10ZM0.00 24.90L2.15 23.70L4.30 24.90L4.30 41.15L0.00 45.45ZM29.00 0.55L29.00 21.10L26.85 22.30L24.70 21.10L24.70 4.85ZM29.00 24.90L29.00 45.45L24.70 41.15L24.70 24.90L26.85 23.70ZM21.00 5.30L24.00 5.30L20.50 20.00L17.40 20.00ZM8.30 26.30L11.30 26.30L7.60 40.80L4.60 40.80Z"/><path transform="translate(1794.1,229.8)" d="M0.55 0.00L28.45 0.00L24.15 4.30L4.85 4.30ZM4.85 41.70L24.15 41.70L28.45 46.00L0.55 46.00ZM0.00 0.55L4.30 4.85L4.30 21.10L2.15 22.30L0.00 21.10ZM0.00 24.90L2.15 23.70L4.30 24.90L4.30 41.15L0.00 45.45ZM29.00 0.55L29.00 21.10L26.85 22.30L24.70 21.10L24.70 4.85ZM29.00 24.90L29.00 45.45L24.70 41.15L24.70 24.90L26.85 23.70ZM21.00 5.30L24.00 5.30L20.50 20.00L17.40 20.00ZM8.30 26.30L11.30 26.30L7.60 40.80L4.60 40.80Z"/><path transform="translate(1831.3,229.8)" d="M0.55 0.00L28.45 0.00L24.15 4.30L4.85 4.30ZM4.85 41.70L24.15 41.70L28.45 46.00L0.55 46.00ZM0.00 0.55L4.30 4.85L4.30 21.10L2.15 22.30L0.00 21.10ZM0.00 24.90L2.15 23.70L4.30 24.90L4.30 41.15L0.00 45.45ZM29.00 0.55L29.00 21.10L26.85 22.30L24.70 21.10L24.70 4.85ZM29.00 24.90L29.00 45.45L24.70 41.15L24.70 24.90L26.85 23.70ZM21.00 5.30L24.00 5.30L20.50 20.00L17.40 20.00ZM8.30 26.30L11.30 26.30L7.60 40.80L4.60 40.80Z"/><circle cx="1662.4" cy="244.0" r="2.7"/><circle cx="1662.4" cy="263.0" r="2.7"/><circle cx="1747" cy="244.0" r="2.7"/><circle cx="1747" cy="263.0" r="2.7"/><circle cx="1826.5" cy="273.8" r="2.4"/></g><g fill="#0a0a08"><path transform="translate(1587.4,229.8)" d="M0.55 0.00L28.45 0.00L24.15 4.30L4.85 4.30ZM4.85 41.70L24.15 41.70L28.45 46.00L0.55 46.00ZM0.00 0.55L4.30 4.85L4.30 21.10L2.15 22.30L0.00 21.10ZM0.00 24.90L2.15 23.70L4.30 24.90L4.30 41.15L0.00 45.45ZM29.00 0.55L29.00 21.10L26.85 22.30L24.70 21.10L24.70 4.85ZM29.00 24.90L29.00 45.45L24.70 41.15L24.70 24.90L26.85 23.70ZM21.00 5.30L24.00 5.30L20.50 20.00L17.40 20.00ZM8.30 26.30L11.30 26.30L7.60 40.80L4.60 40.80Z"/><path transform="translate(1625.1,229.8)" d="M0.55 0.00L28.45 0.00L24.15 4.30L4.85 4.30ZM4.85 41.70L24.15 41.70L28.45 46.00L0.55 46.00ZM0.00 0.55L4.30 4.85L4.30 21.10L2.15 22.30L0.00 21.10ZM0.00 24.90L2.15 23.70L4.30 24.90L4.30 41.15L0.00 45.45ZM29.00 0.55L29.00 21.10L26.85 22.30L24.70 21.10L24.70 4.85ZM29.00 24.90L29.00 45.45L24.70 41.15L24.70 24.90L26.85 23.70ZM21.00 5.30L24.00 5.30L20.50 20.00L17.40 20.00ZM8.30 26.30L11.30 26.30L7.60 40.80L4.60 40.80Z"/><path transform="translate(1671.9,229.8)" d="M0.55 0.00L28.45 0.00L24.15 4.30L4.85 4.30ZM4.85 41.70L24.15 41.70L28.45 46.00L0.55 46.00ZM0.00 0.55L4.30 4.85L4.30 21.10L2.15 22.30L0.00 21.10ZM0.00 24.90L2.15 23.70L4.30 24.90L4.30 41.15L0.00 45.45ZM29.00 0.55L29.00 21.10L26.85 22.30L24.70 21.10L24.70 4.85ZM29.00 24.90L29.00 45.45L24.70 41.15L24.70 24.90L26.85 23.70ZM21.00 5.30L24.00 5.30L20.50 20.00L17.40 20.00ZM8.30 26.30L11.30 26.30L7.60 40.80L4.60 40.80Z"/><path transform="translate(1709.6,229.8)" d="M0.55 0.00L28.45 0.00L24.15 4.30L4.85 4.30ZM4.85 41.70L24.15 41.70L28.45 46.00L0.55 46.00ZM0.00 0.55L4.30 4.85L4.30 21.10L2.15 22.30L0.00 21.10ZM0.00 24.90L2.15 23.70L4.30 24.90L4.30 41.15L0.00 45.45ZM29.00 0.55L29.00 21.10L26.85 22.30L24.70 21.10L24.70 4.85ZM29.00 24.90L29.00 45.45L24.70 41.15L24.70 24.90L26.85 23.70ZM21.00 5.30L24.00 5.30L20.50 20.00L17.40 20.00ZM8.30 26.30L11.30 26.30L7.60 40.80L4.60 40.80Z"/><path transform="translate(1756.4,229.8)" d="M0.55 0.00L28.45 0.00L24.15 4.30L4.85 4.30ZM4.85 41.70L24.15 41.70L28.45 46.00L0.55 46.00ZM0.00 0.55L4.30 4.85L4.30 21.10L2.15 22.30L0.00 21.10ZM0.00 24.90L2.15 23.70L4.30 24.90L4.30 41.15L0.00 45.45ZM29.00 0.55L29.00 21.10L26.85 22.30L24.70 21.10L24.70 4.85ZM29.00 24.90L29.00 45.45L24.70 41.15L24.70 24.90L26.85 23.70ZM21.00 5.30L24.00 5.30L20.50 20.00L17.40 20.00ZM8.30 26.30L11.30 26.30L7.60 40.80L4.60 40.80Z"/><path transform="translate(1794.1,229.8)" d="M0.55 0.00L28.45 0.00L24.15 4.30L4.85 4.30ZM4.85 41.70L24.15 41.70L28.45 46.00L0.55 46.00ZM0.00 0.55L4.30 4.85L4.30 21.10L2.15 22.30L0.00 21.10ZM0.00 24.90L2.15 23.70L4.30 24.90L4.30 41.15L0.00 45.45ZM29.00 0.55L29.00 21.10L26.85 22.30L24.70 21.10L24.70 4.85ZM29.00 24.90L29.00 45.45L24.70 41.15L24.70 24.90L26.85 23.70ZM21.00 5.30L24.00 5.30L20.50 20.00L17.40 20.00ZM8.30 26.30L11.30 26.30L7.60 40.80L4.60 40.80Z"/><path transform="translate(1831.3,229.8)" d="M0.55 0.00L28.45 0.00L24.15 4.30L4.85 4.30ZM4.85 41.70L24.15 41.70L28.45 46.00L0.55 46.00ZM0.00 0.55L4.30 4.85L4.30 21.10L2.15 22.30L0.00 21.10ZM0.00 24.90L2.15 23.70L4.30 24.90L4.30 41.15L0.00 45.45ZM29.00 0.55L29.00 21.10L26.85 22.30L24.70 21.10L24.70 4.85ZM29.00 24.90L29.00 45.45L24.70 41.15L24.70 24.90L26.85 23.70ZM21.00 5.30L24.00 5.30L20.50 20.00L17.40 20.00ZM8.30 26.30L11.30 26.30L7.60 40.80L4.60 40.80Z"/><circle cx="1662.4" cy="244.0" r="2.7"/><circle cx="1662.4" cy="263.0" r="2.7"/><circle cx="1747" cy="244.0" r="2.7"/><circle cx="1747" cy="263.0" r="2.7"/><circle cx="1826.5" cy="273.8" r="2.4"/></g></svg>
<div class="abs" style="left:0;top:0;width:1920px;height:1040px;pointer-events:none">
 <div class="item" style="top:333px"><i class="dot g" style="top:13px"></i><b>Show with 300 drones</b><s style="letter-spacing:-0.25px">300 drones, 5:04, max AHL 169.3 m, spacing 3.0 m</s></div>
 <div class="abs" style="left:1882px;top:344px;width:18px;height:18px"><svg width="18" height="18"><path d="M2.5 2.5L15.5 15.5M15.5 2.5L2.5 15.5" stroke="#777" stroke-width="2.3"/></svg></div>
 <div class="abs" style="left:1490px;top:383px;width:430px;height:1px;background:#ddd"></div>
 <div class="item" style="top:394px"><i class="dot g"></i><b style="letter-spacing:0.23px">Setup environment</b><s style="letter-spacing:-0.08px">Outdoor, relative to 130.0m AMSL</s></div>
 <div class="item" style="top:456px"><i class="dot bl"></i><b style="letter-spacing:-0.09px">Adapt show to venue <span class="pro">PRO</span></b><s style="letter-spacing:0.24px">Adjust takeoff grid and show layout if needed</s></div>
 <div class="item" style="top:518px"><i class="dot g"></i><b>Assign drones to show</b><s style="letter-spacing:-0.14px">Placement accuracy &le; 0.63 cm</s></div>
 <div class="item" style="top:578px"><i class="dot g"></i><b>Setup geofence</b><s style="letter-spacing:0.05px">Automatic geofence in use</s></div>
 <div class="item" style="top:638px"><i class="dot g"></i><b style="letter-spacing:0.1px">Upload show data</b><s style="letter-spacing:0.13px">Click here to start the upload process</s></div>
 <div class="item" style="top:697px"><i class="dot bl" style="top:3px"></i><b style="letter-spacing:0.13px">Onboard preflight checks</b></div>
 <div class="item" style="top:733px"><i class="dot bl" style="top:3px"></i><b style="letter-spacing:0.13px">Manual preflight checks</b></div>
 <div class="abs" style="left:1490px;top:761px;width:430px;height:1px;background:#ddd"></div>
 <div class="item" style="top:772px"><i class="dot gr"></i><b style="letter-spacing:0.09px">Choose start time</b><s style="letter-spacing:0.1px">Not set yet</s></div>
 <div class="abs" style="left:1494px;top:964px;width:422px;height:10px;background:linear-gradient(to bottom,rgba(0,0,0,0),rgba(0,0,0,0.12));-webkit-mask-image:linear-gradient(to right,transparent,#000 6%,#000 94%,transparent)"></div>
 <div class="item" style="top:986px"><i class="dot gr" style="top:13px"></i><b style="font-weight:bold;color:#222;transform:scaleX(0.862);transform-origin:0 0">AUTHORIZE START OF SHOW</b><s style="top:23px;letter-spacing:0.3px">Authorization required before takeoff</s></div>
 <svg class="abs" style="left:0;top:0" width="1920" height="1040"><path d="M1500 688L1520 686L1545 684.5L1880 684.5L1900 686.5L1907 688.5Q1912 690.5 1912 696L1912 717Q1912 722 1906 723.5L1888 725.5L1870 727L1530 727L1510 725.5L1500 724Q1494 722 1494 716L1494 695Q1494 689 1500 688Z" fill="none" stroke="#e61c26" stroke-width="7" stroke-linejoin="round"/></svg>
</div>

</body></html>
